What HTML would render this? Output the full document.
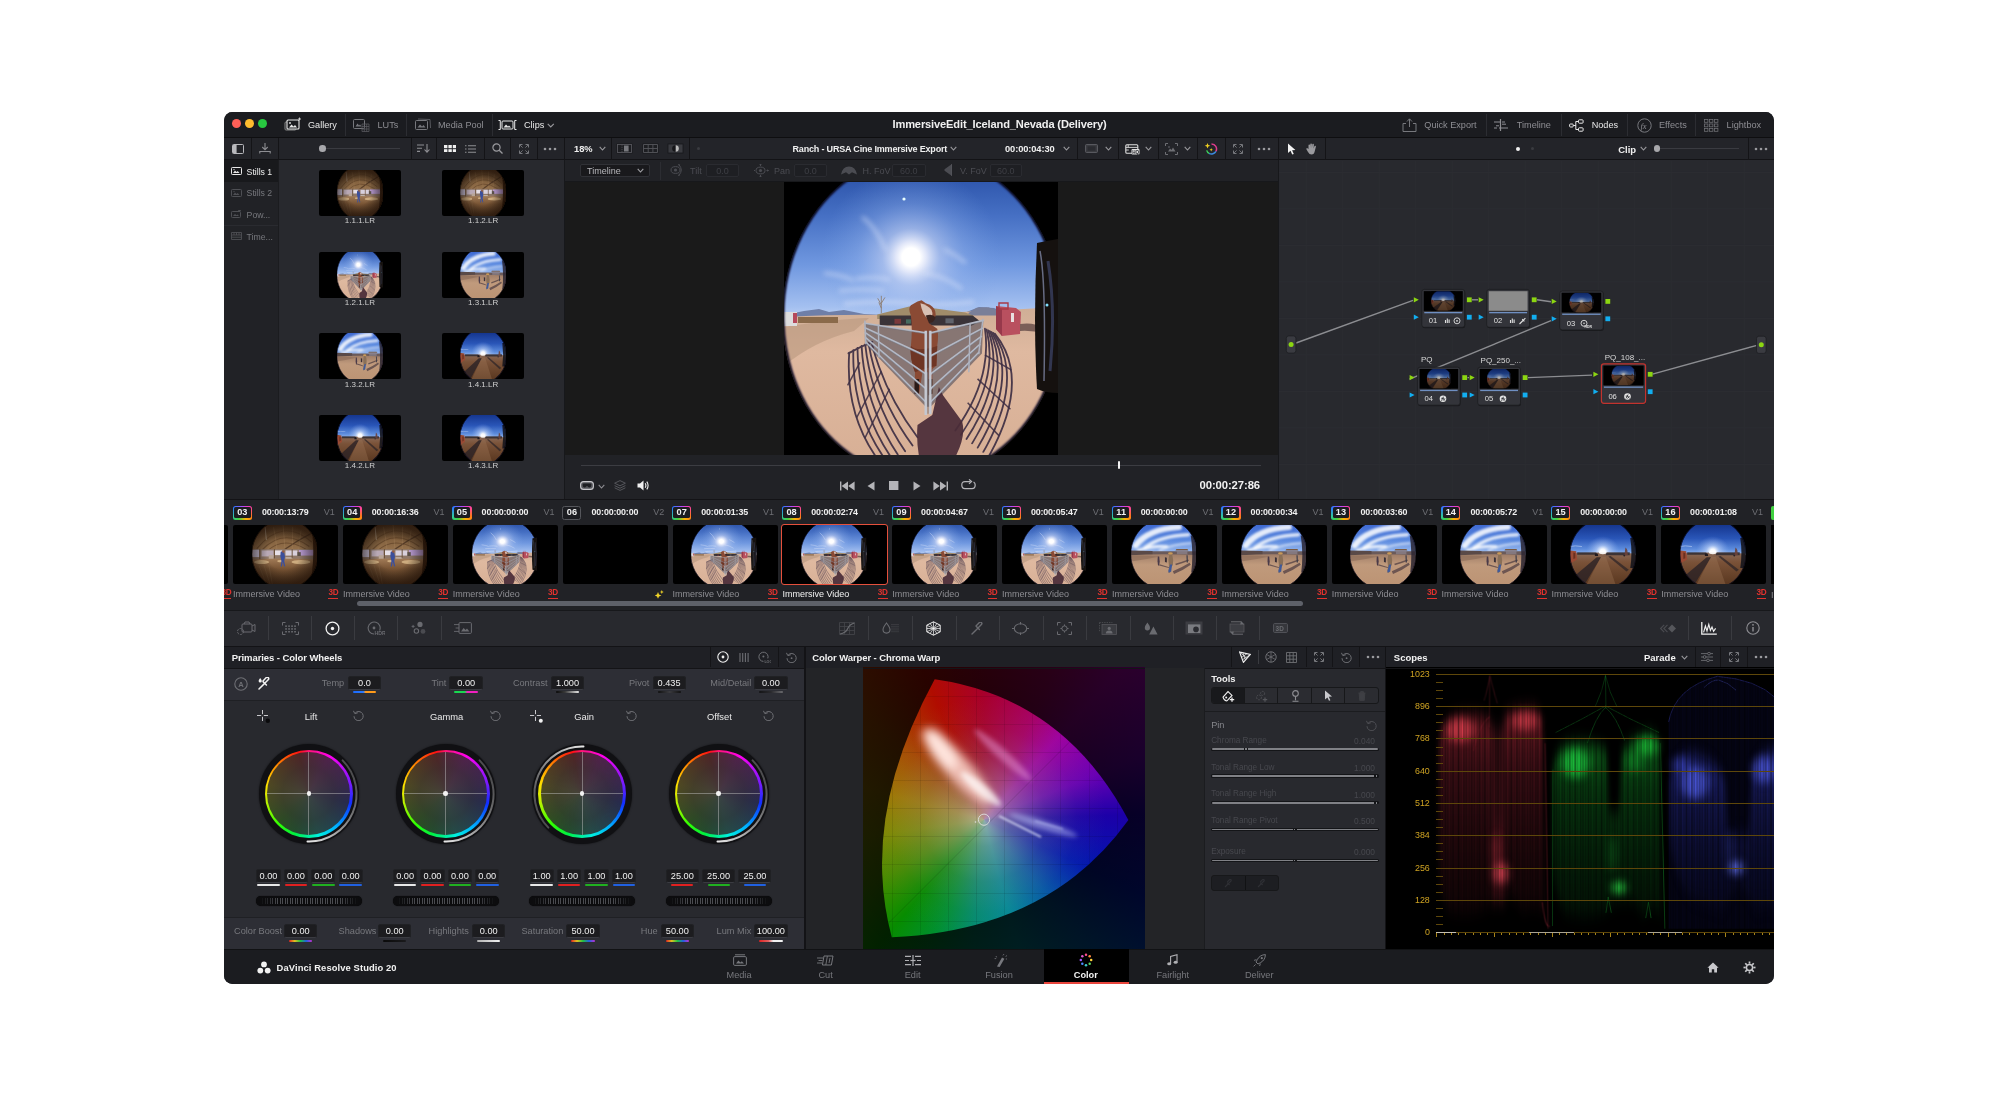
<!DOCTYPE html><html><head><meta charset="utf-8"><title>DaVinci Resolve</title><style>
*{box-sizing:border-box;margin:0;padding:0}
html,body{width:2000px;height:1094px;background:#fff;overflow:hidden}
body{font-family:"Liberation Sans",sans-serif;position:relative;color:#e6e6e6;font-size:9px}
.a{position:absolute}
.t{position:absolute;white-space:nowrap;line-height:1}
#win{position:absolute;left:224px;top:112px;width:1550px;height:872px;background:#28292e;border-radius:8.5px;overflow:hidden;will-change:transform}
.b{font-weight:bold}
</style></head><body>
<div id="win">
<div class="a" style="left:0px;top:0px;width:1550px;height:26px;background:#1b1c20;"></div>
<div class="a" style="left:0px;top:26px;width:1550px;height:22px;background:#232429;"></div>
<div class="a" style="left:0px;top:25px;width:1550px;height:1px;background:#0e0e10;"></div>
<div class="a" style="left:0px;top:47px;width:1550px;height:1px;background:#131316;"></div>
<div class="a" style="left:0px;top:48px;width:54px;height:339px;background:#212226;"></div>
<div class="a" style="left:54px;top:48px;width:286px;height:339px;background:#28292e;"></div>
<div class="a" style="left:340px;top:48px;width:714px;height:21px;background:#212226;"></div>
<div class="a" style="left:340px;top:69px;width:714px;height:274px;background:#1a1a1a;"></div>
<div class="a" style="left:340px;top:343px;width:714px;height:44px;background:#212226;"></div>
<div class="a" style="left:1054px;top:48px;width:496px;height:339px;background:#28292e;"></div>
<div class="a" style="left:0px;top:387px;width:1550px;height:111px;background:#212226;"></div>
<div class="a" style="left:0px;top:498px;width:1550px;height:36px;background:#28292e;"></div>
<div class="a" style="left:0px;top:534px;width:1550px;height:22px;background:#1f2025;"></div>
<div class="a" style="left:0px;top:556px;width:580px;height:32px;background:#2d2e35;"></div>
<div class="a" style="left:0px;top:588px;width:580px;height:217px;background:#28292e;"></div>
<div class="a" style="left:0px;top:805px;width:580px;height:32px;background:#2d2e35;"></div>
<div class="a" style="left:582px;top:556px;width:580px;height:281px;background:#28292e;"></div>
<div class="a" style="left:1162px;top:556px;width:388px;height:281px;background:#000;"></div>
<div class="a" style="left:0px;top:837px;width:1550px;height:35px;background:#1b1c20;"></div>

<svg width="0" height="0" style="position:absolute">
<defs>
<clipPath id="lens"><path d="M138,-27 A139.5,162 0 1,0 138.01,-27Z"/></clipPath>
<filter color-interpolation-filters="sRGB" id="bl1" x="-20%" y="-20%" width="140%" height="140%"><feGaussianBlur stdDeviation="1"/></filter>
<filter color-interpolation-filters="sRGB" id="bl2" x="-20%" y="-20%" width="140%" height="140%"><feGaussianBlur stdDeviation="2.5"/></filter>
<filter color-interpolation-filters="sRGB" id="bl4" x="-30%" y="-30%" width="160%" height="160%"><feGaussianBlur stdDeviation="5"/></filter>
<filter color-interpolation-filters="sRGB" id="bl8" x="-40%" y="-40%" width="180%" height="180%"><feGaussianBlur stdDeviation="10"/></filter>
<linearGradient id="skyA" x1="0" y1="0" x2="0" y2="1"><stop offset="0" stop-color="#3058ae"/><stop offset="0.25" stop-color="#4670c4"/><stop offset="0.6" stop-color="#7098e0"/><stop offset="0.9" stop-color="#a4c0f0"/><stop offset="1" stop-color="#c4d6f4"/></linearGradient>
<radialGradient id="sunA" cx="127" cy="76" r="90" gradientUnits="userSpaceOnUse"><stop offset="0" stop-color="#fff"/><stop offset="0.1" stop-color="#fff"/><stop offset="0.17" stop-color="#eef0fc" stop-opacity="0.9"/><stop offset="0.32" stop-color="#c4d2f4" stop-opacity="0.6"/><stop offset="0.6" stop-color="#9cbaf0" stop-opacity="0.3"/><stop offset="1" stop-color="#78a0e4" stop-opacity="0"/></radialGradient>
<radialGradient id="vig" cx="131" cy="137" r="150" gradientUnits="userSpaceOnUse"><stop offset="0.8" stop-color="#000" stop-opacity="0"/><stop offset="0.93" stop-color="#0a0a30" stop-opacity="0.35"/><stop offset="1" stop-color="#000" stop-opacity="0.7"/></radialGradient>
<linearGradient id="gndA" x1="0" y1="0" x2="0" y2="1"><stop offset="0" stop-color="#cfae96"/><stop offset="0.3" stop-color="#dfb9a0"/><stop offset="1" stop-color="#d8b096"/></linearGradient>

<symbol id="scA" viewBox="0 0 274 274">
<rect width="274" height="274" fill="#000"/>
<g clip-path="url(#lens)">
 <rect width="274" height="140" fill="url(#skyA)"/>
 <rect width="274" height="140" fill="url(#sunA)"/>
 <g filter="url(#bl2)" stroke="#dfe6fa" stroke-opacity="0.55" fill="none" stroke-width="3">
  <path d="M40,92 q20,2 30,8"/><path d="M72,98 q20,-3 34,1"/><path d="M55,110 q25,-3 45,0"/><path d="M140,92 q20,3 38,16"/><path d="M78,36 q14,10 24,34"/><path d="M160,68 q12,6 22,14"/><path d="M60,123 q40,-4 70,0 q30,2 60,-2" stroke-width="4" stroke-opacity="0.5"/>
 </g>
 <circle cx="120" cy="18" r="1.6" fill="#e8ffff"/>
 <!-- mountains -->
 <path d="M0,134 L20,130 L35,128 L45,131 L60,129 L80,133 L100,134 L180,132 L195,126 L210,127 L225,133 L274,128 L274,140 L0,140Z" fill="#6f7fa8"/>
 <!-- ground -->
 <path d="M0,136 Q60,133 100,134 L200,130 Q240,128 274,126 L274,274 L0,274Z" fill="url(#gndA)"/>
 <path d="M0,146 Q50,138 85,137 L70,150 Q30,160 0,185Z" fill="#b9987e" opacity="0.6"/>
 <!-- left building -->
 <rect x="0" y="131" width="13" height="14" fill="#ddd"/><rect x="9" y="132" width="4" height="10" fill="#b5485a"/>
 <path d="M14,136 h40 v6 h-40z" fill="#8a6a4a"/>

 <g transform="translate(56.2,99.2) scale(0.16447)">
  <!-- mountains right, roof, pen ground -->
  <path d="M780,200 L830,168 L900,165 L960,185 L960,215 L780,215Z" fill="#7a7f98"/>
  <path d="M150,265 L520,325 L550,325 L870,245 L862,445 L550,770 L520,770 L150,385Z" fill="#6f6468" opacity=".78"/>
  <path d="M225,208 L420,160 L520,165 L760,196 L812,216 L812,236 L225,236Z" fill="#a08c6a"/>
  <path d="M240,214 L805,214 L850,250 L800,275 L240,275Z" fill="#3a3338"/>
  <g fill="#8a3b3b" opacity=".8"><rect x="330" y="235" width="40" height="30"/><rect x="640" y="232" width="50" height="30" fill="#6a707a"/><rect x="400" y="238" width="30" height="26" fill="#4a7a6a"/></g>
  <path d="M250,200 L250,95 M250,150 L228,110 M250,140 L272,105 M250,170 L235,135" stroke="#8a7868" stroke-width="5" fill="none"/>
  <!-- fence shadows -->
  <g fill="none" stroke="#3a2c42" stroke-width="11" opacity=".9" stroke-linecap="round"><path d="M55,440 Q30,800 215,1070"/><path d="M80,425 Q70,790 260,1070"/><path d="M105,412 Q110,780 305,1070"/><path d="M130,400 Q150,760 350,1060"/><path d="M152,390 Q190,740 395,1040"/><path d="M172,383 Q230,720 440,1005"/><path d="M190,378 Q270,690 470,955"/><path d="M50,445 Q120,405 195,375"/><path d="M880,295 Q925,600 700,914"/><path d="M890,300 Q965,600 734,940"/><path d="M900,305 Q1005,600 768,966"/><path d="M910,310 Q1045,600 802,992"/><path d="M920,315 Q1085,600 836,1018"/><path d="M930,320 Q1125,600 870,1044"/><path d="M940,325 Q1165,600 904,1070"/></g>
  <g fill="none" stroke="#3a2c42" stroke-width="9" opacity=".85"><path d="M250,555 L100,835"/><path d="M300,660 L150,960"/><path d="M120,500 L45,640"/><path d="M880,455 L1040,545"/><path d="M835,600 L1035,785"/><path d="M775,745 L965,945"/></g>
  <!-- centre shadow -->
  <path d="M600,650 L560,820 L470,880 Q462,980 480,1075 L700,1075 Q765,950 742,860 L625,700Z" fill="#4a2c38" opacity=".93"/>
  <!-- horse -->
  <path d="M470,130 L495,122 L520,140 L545,150 Q585,175 580,215 Q575,250 540,262 Q560,275 590,295 Q600,330 590,400 L585,520 L560,540 L560,690 L538,700 L535,560 L500,560 L480,690 L452,690 L455,560 Q420,470 430,400 Q440,300 430,215 Q410,170 430,152Z" fill="#8a4a34"/>
  <path d="M430,400 Q470,440 590,400 L585,520 Q500,540 455,560 Q420,470 430,400Z" fill="#6e3524"/>
  <path d="M488,140 Q530,150 555,180 Q570,215 545,245 Q520,230 505,200 Q492,170 488,140Z" fill="#d8c0b4"/>
  <path d="M520,215 Q560,200 580,225 Q575,255 540,262Z" fill="#3a2420"/>
  <path d="M452,600 L480,600 L478,690 L452,690Z M538,600 L560,600 L560,690 L538,700Z" fill="#2a1a18"/>
  <!-- rails -->
  <g stroke="#b4b9c6" stroke-width="11" fill="none" stroke-linecap="round">
   <path d="M150,262 L520,320"/><path d="M150,290 L520,460"/><path d="M152,320 L520,570"/><path d="M154,350 L520,660"/><path d="M156,376 L520,742"/>
   <path d="M550,320 L870,245"/><path d="M550,460 L866,292"/><path d="M550,570 L858,342"/><path d="M550,660 L848,392"/><path d="M550,742 L842,440"/>
  </g>
  <g stroke="#70747e" stroke-width="4" fill="none" opacity=".8">
   <path d="M150,268 L520,327"/><path d="M150,296 L520,467"/><path d="M152,326 L520,577"/><path d="M154,356 L520,667"/><path d="M156,382 L520,749"/>
   <path d="M550,327 L870,252"/><path d="M550,467 L866,299"/><path d="M550,577 L858,349"/><path d="M550,667 L848,399"/><path d="M550,749 L842,447"/>
  </g>
  <path d="M150,245 L156,390 M232,270 L236,470 M790,262 L782,560 M868,235 L842,450" stroke="#aeb3c0" stroke-width="9" fill="none"/>
  <path d="M520,308 L520,820 M548,308 L548,815" stroke="#c4c8d2" stroke-width="15" fill="none"/>
  <path d="M534,310 L534,812" stroke="#6a6e78" stroke-width="5"/>
 </g>
 <!-- red container -->
 <path d="M212,125 L232,127 L237,131 L236,153 L218,155 L212,148Z" fill="#b9505f"/>
 <path d="M212,125 L218,128 L218,155 L212,148Z" fill="#97394b"/>
 <path d="M215,122 h9 v6 h-9z" fill="none" stroke="#a83a48" stroke-width="1.4"/><rect x="227" y="132" width="3" height="9" fill="#e8dfe0"/>
 <path d="M236,143 q14,-2 24,4 l0,6 q-12,-4 -24,-3z" fill="#7a5f58"/>
 <path d="M138,-27 A139.5,162 0 1,0 138.01,-27Z" fill="none" stroke="#191445" stroke-width="3.5" filter="url(#bl1)" opacity="0.85"/>
</g>
<path d="M138,-27 A139.5,162 0 1,0 138.01,-27Z" fill="none" stroke="#000" stroke-width="2" filter="url(#bl1)"/>
 <!-- lens object right -->
 <path d="M253,62 Q262,60 274,58 L274,212 Q262,212 253,208 Q249,140 253,62Z" fill="#15110f"/>
 <path d="M256,70 Q262,100 260,200" stroke="#8a93b5" stroke-width="1.5" fill="none" opacity="0.7"/>
 <path d="M264,80 Q272,130 266,190" stroke="#3a4060" stroke-width="3" fill="none" opacity="0.8"/>
 <circle cx="263" cy="124" r="1.5" fill="#7fe0ff"/>
</symbol>

<linearGradient id="ceilB" x1="0" y1="0" x2="0" y2="1"><stop offset="0" stop-color="#553a22"/><stop offset="0.5" stop-color="#84623f"/><stop offset="1" stop-color="#9c7852"/></linearGradient>
<linearGradient id="gndB" x1="0" y1="0" x2="0" y2="1"><stop offset="0" stop-color="#a27c58"/><stop offset="0.4" stop-color="#785434"/><stop offset="1" stop-color="#573a22"/></linearGradient>
<radialGradient id="vigB" cx="131" cy="137" r="150" gradientUnits="userSpaceOnUse"><stop offset="0.45" stop-color="#000" stop-opacity="0"/><stop offset="0.95" stop-color="#1a0d05" stop-opacity="0.65"/></radialGradient>
<symbol id="scB" viewBox="0 0 274 274">
<rect width="274" height="274" fill="#000"/>
<g clip-path="url(#lens)">
 <rect width="274" height="140" fill="url(#ceilB)"/>
 <g fill="none" stroke="#5a3d24" stroke-width="5" opacity="0.6">
  <path d="M20,110 Q130,-40 250,80"/><path d="M40,118 Q130,10 240,100"/><path d="M60,124 Q130,50 225,112"/>
 </g>
 <path d="M120,125 Q190,70 262,30" stroke="#4a3220" stroke-width="6" fill="none" opacity="0.8"/>
 <path d="M55,10 L60,70" stroke="#e6dccc" stroke-width="2.5" opacity="0.8"/>
 <g fill="none" stroke="#c9a77c" stroke-width="1.5" opacity="0.5">
  <path d="M90,10 Q100,60 105,120"/><path d="M130,0 Q135,60 138,120"/><path d="M170,8 Q170,60 168,118"/><path d="M205,25 Q200,70 195,118"/>
 </g>
 <rect y="112" width="274" height="55" fill="#8f7868"/>
 <g filter="url(#bl1)">
  <rect x="0" y="115" width="34" height="34" fill="#c8c0d8"/><rect x="40" y="118" width="50" height="28" fill="#b9a9b5"/>
  <rect x="96" y="118" width="30" height="22" fill="#e6dfe6"/><rect x="140" y="118" width="50" height="24" fill="#d8d0dc"/>
  <rect x="196" y="116" width="62" height="26" fill="#b79ad0"/><rect x="190" y="126" width="14" height="18" fill="#5a5048"/>
  <rect x="70" y="140" width="20" height="44" fill="#b9a698"/><rect x="140" y="150" width="30" height="24" fill="#c9bdb5"/>
  <rect x="30" y="112" width="5" height="50" fill="#6b5038"/><rect x="166" y="112" width="4" height="44" fill="#6b5038"/><rect x="92" y="112" width="4" height="44" fill="#6b5038"/>
 </g>
 <path d="M0,160 Q130,150 274,160 L274,274 L0,274Z" fill="url(#gndB)"/>
 <g filter="url(#bl2)" fill="#e0c090" opacity="0.75"><ellipse cx="40" cy="172" rx="32" ry="9"/><ellipse cx="205" cy="172" rx="40" ry="10"/><ellipse cx="120" cy="168" rx="14" ry="5"/></g>
 <path d="M120,124 q8,-6 14,2 l4,20 l-3,22 l4,24 l-5,1 l-5,-22 l-4,22 l-5,0 l3,-26 q-8,-22 -3,-43z" fill="#3c4f9a"/>
 <circle cx="131" cy="124" r="5" fill="#9a5a3a"/>
 <g stroke="#a58a6a" stroke-width="1.5" opacity="0.6"><path d="M30,190 L60,274"/><path d="M50,186 L75,274"/><path d="M70,184 L85,274"/></g>
 <path d="M252,40 Q262,130 250,230 L274,230 L274,40Z" fill="#2a1608" opacity="0.85"/>
 <rect width="274" height="274" fill="url(#vigB)"/>
 <path d="M138,-27 A139.5,162 0 1,0 138.01,-27Z" fill="none" stroke="#1a0d05" stroke-width="5" filter="url(#bl1)" opacity="0.85"/>
</g>
<path d="M138,-27 A139.5,162 0 1,0 138.01,-27Z" fill="none" stroke="#000" stroke-width="2" filter="url(#bl1)"/>
</symbol>

<linearGradient id="skyC" x1="0" y1="0" x2="0" y2="1"><stop offset="0" stop-color="#3f6ad2"/><stop offset="0.5" stop-color="#5b8ae0"/><stop offset="1" stop-color="#a8c4f0"/></linearGradient>
<linearGradient id="gndC" x1="0" y1="0" x2="0" y2="1"><stop offset="0" stop-color="#a07e68"/><stop offset="0.35" stop-color="#c09a7c"/><stop offset="1" stop-color="#bc9474"/></linearGradient>
<symbol id="scC" viewBox="0 0 274 274">
<rect width="274" height="274" fill="#000"/>
<g clip-path="url(#lens)">
 <rect width="274" height="140" fill="url(#skyC)"/>
 <g filter="url(#bl4)" fill="none" stroke="#fff" stroke-linecap="round">
  <path d="M20,95 Q70,20 200,10" stroke-width="26" opacity="0.85"/>
  <path d="M60,105 Q120,50 240,45" stroke-width="16" opacity="0.8"/>
  <path d="M30,118 Q90,95 150,100" stroke-width="12" opacity="0.85"/>
  <path d="M120,118 Q180,88 250,85" stroke-width="9" opacity="0.6"/>
 </g>
 <path d="M0,122 L274,122 L274,145 L0,145Z" fill="#6a5a5a"/>
 <path d="M0,118 L90,121 L90,140 L0,140Z" fill="#5a4a48"/>
 <path d="M190,112 L236,112 L240,118 L186,118Z" fill="#7a5a40"/><rect x="192" y="118" width="44" height="18" fill="#8a8088" opacity="0.8"/>
 <path d="M0,140 Q130,132 274,140 L274,274 L0,274Z" fill="url(#gndC)"/>
 <path d="M0,142 Q60,140 120,146 Q60,160 0,170Z" fill="#8a6a58" opacity="0.6"/>
 <g fill="#4a3a40" opacity="0.7" filter="url(#bl1)"><path d="M175,215 Q215,195 245,175 L250,185 Q220,210 180,228Z"/><path d="M185,180 Q215,170 240,160 L242,166 Q215,178 188,187Z"/><path d="M120,182 Q140,188 160,196 L158,200 Q138,194 118,188Z"/></g>
 <!-- people -->
 <path d="M160,138 q8,-3 13,3 q6,22 2,46 l-6,4 l-4,28 l-8,4 l2,-30 q-6,-30 1,-55z" fill="#8a7058"/>
 <path d="M156,214 l8,-30 l8,0 l-4,32 l-10,6z" fill="#3f5a9a"/>
 <ellipse cx="165" cy="132" rx="10" ry="5" fill="#c99a58"/>
 <path d="M112,146 l6,0 l2,22 l-2,20 l-5,0 l-2,-20z" fill="#4a3a48"/><path d="M142,150 l8,2 l0,22 l-8,-2z" fill="#3a3038"/>
 <path d="M232,140 l5,0 l1,34 l-5,0z" fill="#3a3a48"/>
 <path d="M250,50 Q262,130 252,220 L274,220 L274,50Z" fill="#2a2530" opacity="0.85"/>
 <path d="M138,-27 A139.5,162 0 1,0 138.01,-27Z" fill="none" stroke="#191445" stroke-width="3.5" filter="url(#bl1)" opacity="0.85"/>
</g>
<path d="M138,-27 A139.5,162 0 1,0 138.01,-27Z" fill="none" stroke="#000" stroke-width="2" filter="url(#bl1)"/>
</symbol>

<linearGradient id="skyD" x1="0" y1="0" x2="0" y2="1"><stop offset="0" stop-color="#15368f"/><stop offset="0.45" stop-color="#2a56b8"/><stop offset="0.8" stop-color="#5d8cdc"/><stop offset="1" stop-color="#9bbcf0"/></linearGradient>
<radialGradient id="sunD" cx="137" cy="122" r="70" gradientUnits="userSpaceOnUse"><stop offset="0" stop-color="#fff"/><stop offset="0.15" stop-color="#fff" stop-opacity="0.95"/><stop offset="0.4" stop-color="#cfe0ff" stop-opacity="0.55"/><stop offset="1" stop-color="#8fb0f0" stop-opacity="0"/></radialGradient>
<linearGradient id="gndD" x1="0" y1="0" x2="0" y2="1"><stop offset="0" stop-color="#8a6a58"/><stop offset="0.3" stop-color="#7a5238"/><stop offset="1" stop-color="#5a3820"/></linearGradient>
<symbol id="scD" viewBox="0 0 274 274">
<rect width="274" height="274" fill="#000"/>
<g clip-path="url(#lens)">
 <rect width="274" height="140" fill="url(#skyD)"/>
 <rect width="274" height="150" fill="url(#sunD)"/>
 <path d="M0,100 q20,-6 50,0" stroke="#b9cdf2" stroke-width="4" fill="none" filter="url(#bl1)" opacity="0.7"/>
 <path d="M0,132 Q130,124 274,132 L274,274 L0,274Z" fill="url(#gndD)"/>
 <path d="M30,126 L110,128 L110,138 L30,138Z M150,128 L250,126 L250,140 L150,140Z" fill="#2f2a30" opacity="0.85"/>
 <path d="M0,118 L26,122 L30,160 L4,178 L0,176Z" fill="#9a4a34"/><path d="M14,128 l8,2 l0,24 l-8,4z" fill="#6a3020"/>
 <path d="M232,104 q6,4 8,14 l2,22 l-14,0 l2,-20z" fill="#6a4038" opacity="0.9"/>
 <g filter="url(#bl1)"><path d="M112,150 L20,236 L62,274 L130,150Z" fill="#2a2226" opacity="0.8"/><path d="M160,146 L236,216 L246,208 L170,144Z" fill="#2a2226" opacity="0.7"/><path d="M130,148 L150,148 L190,274 L70,274Z" fill="#a07858" opacity="0.35"/></g>
 <path d="M104,134 q6,-6 12,0 l2,10 l-14,0z" fill="#1f1a20"/><circle cx="227" cy="142" r="4" fill="#2a2024"/>
 <ellipse cx="137" cy="128" rx="16" ry="8" fill="#fff" filter="url(#bl2)" opacity="0.9"/>
 <path d="M252,60 Q262,130 252,200 L274,200 L274,60Z" fill="#15151c" opacity="0.9"/>
 <path d="M138,-27 A139.5,162 0 1,0 138.01,-27Z" fill="none" stroke="#0a0a25" stroke-width="6" filter="url(#bl2)" opacity="0.9"/>
</g>
<path d="M138,-27 A139.5,162 0 1,0 138.01,-27Z" fill="none" stroke="#000" stroke-width="2" filter="url(#bl1)"/>
</symbol>

</defs></svg>

<svg class="a" style="left:559.8px;top:68.80000000000001px;" width="274" height="274" viewBox="0 0 274 274"><use href="#scA"/></svg>
<div class="a" style="left:95.19999999999999px;top:57.80000000000001px;width:81.5px;height:46px;background:#000;border-radius:2px;overflow:hidden;"><svg class="a" style="left:17.8px;top:0px" width="46" height="46" viewBox="0 0 274 274" preserveAspectRatio="none"><use href="#scB"/></svg></div>
<div class="t" style="left:95.19999999999999px;top:105.30000000000001px;width:81.5px;text-align:center;font-size:8px;color:#d0d0d0">1.1.1.LR</div>
<div class="a" style="left:218.39999999999998px;top:57.80000000000001px;width:81.5px;height:46px;background:#000;border-radius:2px;overflow:hidden;"><svg class="a" style="left:17.8px;top:0px" width="46" height="46" viewBox="0 0 274 274" preserveAspectRatio="none"><use href="#scB"/></svg></div>
<div class="t" style="left:218.39999999999998px;top:105.30000000000001px;width:81.5px;text-align:center;font-size:8px;color:#d0d0d0">1.1.2.LR</div>
<div class="a" style="left:95.19999999999999px;top:139.5px;width:81.5px;height:46px;background:#000;border-radius:2px;overflow:hidden;"><svg class="a" style="left:17.8px;top:0px" width="46" height="46" viewBox="0 0 274 274" preserveAspectRatio="none"><use href="#scA"/></svg></div>
<div class="t" style="left:95.19999999999999px;top:187.0px;width:81.5px;text-align:center;font-size:8px;color:#d0d0d0">1.2.1.LR</div>
<div class="a" style="left:218.39999999999998px;top:139.5px;width:81.5px;height:46px;background:#000;border-radius:2px;overflow:hidden;"><svg class="a" style="left:17.8px;top:0px" width="46" height="46" viewBox="0 0 274 274" preserveAspectRatio="none"><use href="#scC"/></svg></div>
<div class="t" style="left:218.39999999999998px;top:187.0px;width:81.5px;text-align:center;font-size:8px;color:#d0d0d0">1.3.1.LR</div>
<div class="a" style="left:95.19999999999999px;top:221.20000000000005px;width:81.5px;height:46px;background:#000;border-radius:2px;overflow:hidden;"><svg class="a" style="left:17.8px;top:0px" width="46" height="46" viewBox="0 0 274 274" preserveAspectRatio="none"><use href="#scC"/></svg></div>
<div class="t" style="left:95.19999999999999px;top:268.70000000000005px;width:81.5px;text-align:center;font-size:8px;color:#d0d0d0">1.3.2.LR</div>
<div class="a" style="left:218.39999999999998px;top:221.20000000000005px;width:81.5px;height:46px;background:#000;border-radius:2px;overflow:hidden;"><svg class="a" style="left:17.8px;top:0px" width="46" height="46" viewBox="0 0 274 274" preserveAspectRatio="none"><use href="#scD"/></svg></div>
<div class="t" style="left:218.39999999999998px;top:268.70000000000005px;width:81.5px;text-align:center;font-size:8px;color:#d0d0d0">1.4.1.LR</div>
<div class="a" style="left:95.19999999999999px;top:302.90000000000003px;width:81.5px;height:46px;background:#000;border-radius:2px;overflow:hidden;"><svg class="a" style="left:17.8px;top:0px" width="46" height="46" viewBox="0 0 274 274" preserveAspectRatio="none"><use href="#scD"/></svg></div>
<div class="t" style="left:95.19999999999999px;top:350.40000000000003px;width:81.5px;text-align:center;font-size:8px;color:#d0d0d0">1.4.2.LR</div>
<div class="a" style="left:218.39999999999998px;top:302.90000000000003px;width:81.5px;height:46px;background:#000;border-radius:2px;overflow:hidden;"><svg class="a" style="left:17.8px;top:0px" width="46" height="46" viewBox="0 0 274 274" preserveAspectRatio="none"><use href="#scD"/></svg></div>
<div class="t" style="left:218.39999999999998px;top:350.40000000000003px;width:81.5px;text-align:center;font-size:8px;color:#d0d0d0">1.4.3.LR</div>
<div class="a" style="left:9.099999999999994px;top:413px;width:105px;height:59px;background:#000;border-radius:2px;overflow:hidden;"><svg class="a" style="left:18.8px;top:0px" width="65.5" height="59" viewBox="0 0 274 274" preserveAspectRatio="none"><use href="#scB"/></svg></div>
<div class="a" style="left:118.95999999999998px;top:413px;width:105px;height:59px;background:#000;border-radius:2px;overflow:hidden;"><svg class="a" style="left:18.8px;top:0px" width="65.5" height="59" viewBox="0 0 274 274" preserveAspectRatio="none"><use href="#scB"/></svg></div>
<div class="a" style="left:228.82px;top:413px;width:105px;height:59px;background:#000;border-radius:2px;overflow:hidden;"><svg class="a" style="left:18.8px;top:0px" width="65.5" height="59" viewBox="0 0 274 274" preserveAspectRatio="none"><use href="#scA"/></svg></div>
<div class="a" style="left:338.67999999999995px;top:413px;width:105px;height:59px;background:#000;border-radius:2px"></div>
<div class="a" style="left:448.53999999999996px;top:413px;width:105px;height:59px;background:#000;border-radius:2px;overflow:hidden;"><svg class="a" style="left:18.8px;top:0px" width="65.5" height="59" viewBox="0 0 274 274" preserveAspectRatio="none"><use href="#scA"/></svg></div>
<div class="a" style="left:558.4px;top:413px;width:105px;height:59px;background:#000;border-radius:2px;overflow:hidden;"><svg class="a" style="left:18.8px;top:0px" width="65.5" height="59" viewBox="0 0 274 274" preserveAspectRatio="none"><use href="#scA"/></svg></div>
<div class="a" style="left:668.26px;top:413px;width:105px;height:59px;background:#000;border-radius:2px;overflow:hidden;"><svg class="a" style="left:18.8px;top:0px" width="65.5" height="59" viewBox="0 0 274 274" preserveAspectRatio="none"><use href="#scA"/></svg></div>
<div class="a" style="left:778.12px;top:413px;width:105px;height:59px;background:#000;border-radius:2px;overflow:hidden;"><svg class="a" style="left:18.8px;top:0px" width="65.5" height="59" viewBox="0 0 274 274" preserveAspectRatio="none"><use href="#scA"/></svg></div>
<div class="a" style="left:887.98px;top:413px;width:105px;height:59px;background:#000;border-radius:2px;overflow:hidden;"><svg class="a" style="left:18.8px;top:0px" width="65.5" height="59" viewBox="0 0 274 274" preserveAspectRatio="none"><use href="#scC"/></svg></div>
<div class="a" style="left:997.8399999999999px;top:413px;width:105px;height:59px;background:#000;border-radius:2px;overflow:hidden;"><svg class="a" style="left:18.8px;top:0px" width="65.5" height="59" viewBox="0 0 274 274" preserveAspectRatio="none"><use href="#scC"/></svg></div>
<div class="a" style="left:1107.6999999999998px;top:413px;width:105px;height:59px;background:#000;border-radius:2px;overflow:hidden;"><svg class="a" style="left:18.8px;top:0px" width="65.5" height="59" viewBox="0 0 274 274" preserveAspectRatio="none"><use href="#scC"/></svg></div>
<div class="a" style="left:1217.56px;top:413px;width:105px;height:59px;background:#000;border-radius:2px;overflow:hidden;"><svg class="a" style="left:18.8px;top:0px" width="65.5" height="59" viewBox="0 0 274 274" preserveAspectRatio="none"><use href="#scC"/></svg></div>
<div class="a" style="left:1327.4199999999998px;top:413px;width:105px;height:59px;background:#000;border-radius:2px;overflow:hidden;"><svg class="a" style="left:18.8px;top:0px" width="65.5" height="59" viewBox="0 0 274 274" preserveAspectRatio="none"><use href="#scD"/></svg></div>
<div class="a" style="left:1437.28px;top:413px;width:105px;height:59px;background:#000;border-radius:2px;overflow:hidden;"><svg class="a" style="left:18.8px;top:0px" width="65.5" height="59" viewBox="0 0 274 274" preserveAspectRatio="none"><use href="#scD"/></svg></div>
<div class="a" style="left:32.9px;top:629.6px;width:104px;height:104px">
<div class="a" style="left:2px;top:2px;width:100px;height:100px;border-radius:50%;background:#101013;box-shadow:0 0 2px rgba(0,0,0,.6)"></div>
<svg class="a" style="left:0;top:0;transform:rotate(0deg)" width="104" height="104" viewBox="-52 -52 104 104"><defs><linearGradient id="ag308" x1="1" y1="0" x2="0" y2="1"><stop offset="0" stop-color="#bbb" stop-opacity="0.25"/><stop offset="1" stop-color="#e8e8e8"/></linearGradient></defs><path d="M33.6,-33.6 A47.5,47.5 0 0 1 -1.5,47.5" fill="none" stroke="url(#ag308)" stroke-width="2" stroke-linecap="round"/></svg>
<div class="a" style="left:8px;top:8px;width:88px;height:88px;border-radius:50%;background:conic-gradient(from 0deg,#ff1478 0deg,#ff00f0 29deg,#7a1aff 75deg,#1030ff 103deg,#00b0ff 140deg,#00f0e0 167deg,#00f040 200deg,#30ff00 225deg,#c8f000 262deg,#ffe000 283deg,#ff8000 315deg,#ff1010 347deg,#ff1478 360deg)"></div>
<div class="a" style="left:10.6px;top:10.6px;width:82.8px;height:82.8px;border-radius:50%;background:radial-gradient(circle,rgba(62,60,60,.96) 0%,rgba(48,46,46,.9) 45%,rgba(36,34,34,.74) 100%),conic-gradient(from 0deg,#ff1478 0deg,#ff00f0 29deg,#7a1aff 75deg,#1030ff 103deg,#00b0ff 140deg,#00f0e0 167deg,#00f040 200deg,#30ff00 225deg,#c8f000 262deg,#ffe000 283deg,#ff8000 315deg,#ff1010 347deg,#ff1478 360deg)"></div>
<div class="a" style="left:51.5px;top:10.6px;width:1px;height:82.8px;background:rgba(200,200,200,.45)"></div>
<div class="a" style="left:10.6px;top:51.5px;width:82.8px;height:1px;background:rgba(200,200,200,.45)"></div>
<div class="a" style="left:49.8px;top:49.8px;width:4.4px;height:4.4px;border-radius:50%;background:#f2f2f2"></div>
</div>
<div class="a" style="left:169.5px;top:629.6px;width:104px;height:104px">
<div class="a" style="left:2px;top:2px;width:100px;height:100px;border-radius:50%;background:#101013;box-shadow:0 0 2px rgba(0,0,0,.6)"></div>
<svg class="a" style="left:0;top:0;transform:rotate(0deg)" width="104" height="104" viewBox="-52 -52 104 104"><defs><linearGradient id="ag445" x1="1" y1="0" x2="0" y2="1"><stop offset="0" stop-color="#bbb" stop-opacity="0.25"/><stop offset="1" stop-color="#e8e8e8"/></linearGradient></defs><path d="M33.6,-33.6 A47.5,47.5 0 0 1 -1.5,47.5" fill="none" stroke="url(#ag445)" stroke-width="2" stroke-linecap="round"/></svg>
<div class="a" style="left:8px;top:8px;width:88px;height:88px;border-radius:50%;background:conic-gradient(from 0deg,#ff1478 0deg,#ff00f0 29deg,#7a1aff 75deg,#1030ff 103deg,#00b0ff 140deg,#00f0e0 167deg,#00f040 200deg,#30ff00 225deg,#c8f000 262deg,#ffe000 283deg,#ff8000 315deg,#ff1010 347deg,#ff1478 360deg)"></div>
<div class="a" style="left:10.6px;top:10.6px;width:82.8px;height:82.8px;border-radius:50%;background:radial-gradient(circle,rgba(62,60,60,.96) 0%,rgba(48,46,46,.9) 45%,rgba(36,34,34,.74) 100%),conic-gradient(from 0deg,#ff1478 0deg,#ff00f0 29deg,#7a1aff 75deg,#1030ff 103deg,#00b0ff 140deg,#00f0e0 167deg,#00f040 200deg,#30ff00 225deg,#c8f000 262deg,#ffe000 283deg,#ff8000 315deg,#ff1010 347deg,#ff1478 360deg)"></div>
<div class="a" style="left:51.5px;top:10.6px;width:1px;height:82.8px;background:rgba(200,200,200,.45)"></div>
<div class="a" style="left:10.6px;top:51.5px;width:82.8px;height:1px;background:rgba(200,200,200,.45)"></div>
<div class="a" style="left:49.8px;top:49.8px;width:4.4px;height:4.4px;border-radius:50%;background:#f2f2f2"></div>
</div>
<div class="a" style="left:306.1px;top:629.6px;width:104px;height:104px">
<div class="a" style="left:2px;top:2px;width:100px;height:100px;border-radius:50%;background:#101013;box-shadow:0 0 2px rgba(0,0,0,.6)"></div>
<svg class="a" style="left:0;top:0;transform:rotate(180deg)" width="104" height="104" viewBox="-52 -52 104 104"><defs><linearGradient id="ag582" x1="1" y1="0" x2="0" y2="1"><stop offset="0" stop-color="#bbb" stop-opacity="0.25"/><stop offset="1" stop-color="#e8e8e8"/></linearGradient></defs><path d="M33.6,-33.6 A47.5,47.5 0 0 1 -1.5,47.5" fill="none" stroke="url(#ag582)" stroke-width="2" stroke-linecap="round"/></svg>
<div class="a" style="left:8px;top:8px;width:88px;height:88px;border-radius:50%;background:conic-gradient(from 0deg,#ff1478 0deg,#ff00f0 29deg,#7a1aff 75deg,#1030ff 103deg,#00b0ff 140deg,#00f0e0 167deg,#00f040 200deg,#30ff00 225deg,#c8f000 262deg,#ffe000 283deg,#ff8000 315deg,#ff1010 347deg,#ff1478 360deg)"></div>
<div class="a" style="left:10.6px;top:10.6px;width:82.8px;height:82.8px;border-radius:50%;background:radial-gradient(circle,rgba(62,60,60,.96) 0%,rgba(48,46,46,.9) 45%,rgba(36,34,34,.74) 100%),conic-gradient(from 0deg,#ff1478 0deg,#ff00f0 29deg,#7a1aff 75deg,#1030ff 103deg,#00b0ff 140deg,#00f0e0 167deg,#00f040 200deg,#30ff00 225deg,#c8f000 262deg,#ffe000 283deg,#ff8000 315deg,#ff1010 347deg,#ff1478 360deg)"></div>
<div class="a" style="left:51.5px;top:10.6px;width:1px;height:82.8px;background:rgba(200,200,200,.45)"></div>
<div class="a" style="left:10.6px;top:51.5px;width:82.8px;height:1px;background:rgba(200,200,200,.45)"></div>
<div class="a" style="left:49.8px;top:49.8px;width:4.4px;height:4.4px;border-radius:50%;background:#f2f2f2"></div>
</div>
<div class="a" style="left:442.7px;top:629.6px;width:104px;height:104px">
<div class="a" style="left:2px;top:2px;width:100px;height:100px;border-radius:50%;background:#101013;box-shadow:0 0 2px rgba(0,0,0,.6)"></div>
<svg class="a" style="left:0;top:0;transform:rotate(0deg)" width="104" height="104" viewBox="-52 -52 104 104"><defs><linearGradient id="ag718" x1="1" y1="0" x2="0" y2="1"><stop offset="0" stop-color="#bbb" stop-opacity="0.25"/><stop offset="1" stop-color="#e8e8e8"/></linearGradient></defs><path d="M33.6,-33.6 A47.5,47.5 0 0 1 -1.5,47.5" fill="none" stroke="url(#ag718)" stroke-width="2" stroke-linecap="round"/></svg>
<div class="a" style="left:8px;top:8px;width:88px;height:88px;border-radius:50%;background:conic-gradient(from 0deg,#ff1478 0deg,#ff00f0 29deg,#7a1aff 75deg,#1030ff 103deg,#00b0ff 140deg,#00f0e0 167deg,#00f040 200deg,#30ff00 225deg,#c8f000 262deg,#ffe000 283deg,#ff8000 315deg,#ff1010 347deg,#ff1478 360deg)"></div>
<div class="a" style="left:10.6px;top:10.6px;width:82.8px;height:82.8px;border-radius:50%;background:radial-gradient(circle,rgba(62,60,60,.96) 0%,rgba(48,46,46,.9) 45%,rgba(36,34,34,.74) 100%),conic-gradient(from 0deg,#ff1478 0deg,#ff00f0 29deg,#7a1aff 75deg,#1030ff 103deg,#00b0ff 140deg,#00f0e0 167deg,#00f040 200deg,#30ff00 225deg,#c8f000 262deg,#ffe000 283deg,#ff8000 315deg,#ff1010 347deg,#ff1478 360deg)"></div>
<div class="a" style="left:51.5px;top:10.6px;width:1px;height:82.8px;background:rgba(200,200,200,.45)"></div>
<div class="a" style="left:10.6px;top:51.5px;width:82.8px;height:1px;background:rgba(200,200,200,.45)"></div>
<div class="a" style="left:49.8px;top:49.8px;width:4.4px;height:4.4px;border-radius:50%;background:#f2f2f2"></div>
</div>
<div class="a" style="left:639.4px;top:555.4px;width:281.6px;height:281.6px;overflow:hidden;background:conic-gradient(from 0deg at 121px 152.7px,#a8002c 0deg,#a80064 25deg,#a000a0 42deg,#6a00b4 68deg,#1c00a8 88deg,#0018b0 115deg,#0058a8 140deg,#008a98 165deg,#008c70 185deg,#009030 203deg,#078c00 220deg,#4a8c00 240deg,#808a00 262deg,#a07800 285deg,#a84a00 312deg,#b00c00 338deg,#a8002c 360deg)">
<div class="a" style="left:0;top:0;width:100%;height:100%;background:radial-gradient(circle at 121px 152.7px,rgba(0,0,0,.9) 0%,rgba(0,0,0,.8) 50%,rgba(0,0,0,.72) 100%)"></div>
<div class="a" style="left:0;top:0;width:100%;height:100%;clip-path:path('M71.3,11.9 Q-4,150 28.4,269.8 Q186,263 265,152.7 Q200,30 71.3,11.9Z');background:radial-gradient(circle at 121px 152.7px,rgba(185,185,180,.78) 0,rgba(165,165,160,.52) 12%,rgba(140,140,140,.26) 28%,rgba(128,128,128,.08) 42%,rgba(128,128,128,0) 55%),conic-gradient(from 0deg at 121px 152.7px,#a8002c 0deg,#a80064 25deg,#a000a0 42deg,#6a00b4 68deg,#1c00a8 88deg,#0018b0 115deg,#0058a8 140deg,#008a98 165deg,#008c70 185deg,#009030 203deg,#078c00 220deg,#4a8c00 240deg,#808a00 262deg,#a07800 285deg,#a84a00 312deg,#b00c00 338deg,#a8002c 360deg)">
<div class="a" style="left:28.2px;top:0;width:1px;height:100%;background:rgba(0,0,0,.09)"></div><div class="a" style="top:28.2px;left:0;height:1px;width:100%;background:rgba(0,0,0,.09)"></div><div class="a" style="left:56.3px;top:0;width:1px;height:100%;background:rgba(0,0,0,.09)"></div><div class="a" style="top:56.3px;left:0;height:1px;width:100%;background:rgba(0,0,0,.09)"></div><div class="a" style="left:84.5px;top:0;width:1px;height:100%;background:rgba(0,0,0,.09)"></div><div class="a" style="top:84.5px;left:0;height:1px;width:100%;background:rgba(0,0,0,.09)"></div><div class="a" style="left:112.6px;top:0;width:1px;height:100%;background:rgba(0,0,0,.09)"></div><div class="a" style="top:112.6px;left:0;height:1px;width:100%;background:rgba(0,0,0,.09)"></div><div class="a" style="left:140.8px;top:0;width:1px;height:100%;background:rgba(0,0,0,.09)"></div><div class="a" style="top:140.8px;left:0;height:1px;width:100%;background:rgba(0,0,0,.09)"></div><div class="a" style="left:169.0px;top:0;width:1px;height:100%;background:rgba(0,0,0,.09)"></div><div class="a" style="top:169.0px;left:0;height:1px;width:100%;background:rgba(0,0,0,.09)"></div><div class="a" style="left:197.1px;top:0;width:1px;height:100%;background:rgba(0,0,0,.09)"></div><div class="a" style="top:197.1px;left:0;height:1px;width:100%;background:rgba(0,0,0,.09)"></div><div class="a" style="left:225.3px;top:0;width:1px;height:100%;background:rgba(0,0,0,.09)"></div><div class="a" style="top:225.3px;left:0;height:1px;width:100%;background:rgba(0,0,0,.09)"></div><div class="a" style="left:253.4px;top:0;width:1px;height:100%;background:rgba(0,0,0,.09)"></div><div class="a" style="top:253.4px;left:0;height:1px;width:100%;background:rgba(0,0,0,.09)"></div>
<svg class="a" style="left:0;top:0" width="281.6" height="281.6"><line x1="0" y1="281.6" x2="281.6" y2="0" stroke="rgba(0,0,0,.13)" stroke-width="1"/><g filter="url(#bl4)"><ellipse cx="0" cy="0" rx="50" ry="12" fill="#f8cfc6" opacity=".88" transform="translate(94,100) rotate(48)"/><ellipse cx="0" cy="0" rx="24" ry="10" fill="#ffe9e2" opacity=".9" transform="translate(78,82) rotate(55)"/></g><g filter="url(#bl2)"><ellipse cx="0" cy="0" rx="38" ry="5" fill="#f0a0e0" opacity=".45" transform="translate(140,88) rotate(42)"/><ellipse cx="0" cy="0" rx="26" ry="5" fill="#fff" opacity=".7" transform="translate(118,122) rotate(40)"/><ellipse cx="0" cy="0" rx="36" ry="4" fill="#c8d0ff" opacity=".5" transform="translate(180,158) rotate(18)"/></g><g filter="url(#bl1)"><path d="M136,149 L178,170" stroke="#e8ecff" stroke-width="1.6" opacity=".85"/><path d="M172,154 L200,162" stroke="#d0d8ff" stroke-width="1.4" opacity=".5"/></g><circle cx="121" cy="152.7" r="5.6" fill="none" stroke="#e0e0e0" stroke-width="0.9"/><circle cx="112.5" cy="155" r="0.8" fill="#ddd"/></svg>
</div></div>
<div class="a" style="left:1162px;top:555.4px;width:388px;height:282px;overflow:hidden;background:#000">
<svg class="a" style="left:0;top:0" width="388" height="282" viewBox="0 0 388 282"><defs><filter color-interpolation-filters="sRGB" id="sb1" x="-60%" y="-60%" width="220%" height="220%"><feGaussianBlur stdDeviation="9 28"/></filter><filter color-interpolation-filters="sRGB" id="sb2" x="-30%" y="-30%" width="160%" height="160%"><feGaussianBlur stdDeviation="10 22"/></filter><filter color-interpolation-filters="sRGB" id="sb3" x="-80%" y="-80%" width="260%" height="260%"><feGaussianBlur stdDeviation="16"/></filter><filter color-interpolation-filters="sRGB" id="sb0" x="-30%" y="-30%" width="160%" height="160%"><feGaussianBlur stdDeviation="2.5"/></filter><linearGradient id="fr" x1="0" y1="0" x2="0" y2="1"><stop offset="0" stop-color="#c83040" stop-opacity=".62"/><stop offset=".3" stop-color="#8a2030" stop-opacity=".46"/><stop offset="1" stop-color="#4a1018" stop-opacity=".24"/></linearGradient><linearGradient id="fg" x1="0" y1="0" x2="0" y2="1"><stop offset="0" stop-color="#18b030" stop-opacity=".66"/><stop offset=".3" stop-color="#0e7a20" stop-opacity=".48"/><stop offset="1" stop-color="#084a14" stop-opacity=".26"/></linearGradient><linearGradient id="fb" x1="0" y1="0" x2="0" y2="1"><stop offset="0" stop-color="#3a44c8" stop-opacity=".66"/><stop offset=".3" stop-color="#262c90" stop-opacity=".48"/><stop offset="1" stop-color="#14174a" stop-opacity=".24"/></linearGradient></defs><g transform="translate(0,-3.4) scale(0.2651)"><g filter="url(#sb1)"><path d="M200,290 Q215,200 300,195 Q380,190 400,230 L410,600 L440,600 L445,200 Q500,165 560,175 Q590,185 592,260 L600,940 Q560,900 520,930 L480,880 Q440,860 400,900 Q330,960 240,930 Q200,900 200,700Z" fill="url(#fr)"/><path d="M400,240 L445,240 L450,900 L400,900Z" fill="#5a1520" opacity=".6"/></g><g filter="url(#sb3)"><ellipse cx="280" cy="250" rx="55" ry="45" fill="#ff4858" opacity=".75"/><ellipse cx="525" cy="215" rx="50" ry="35" fill="#ff4858" opacity=".7"/><ellipse cx="432" cy="790" rx="26" ry="40" fill="#ff5060" opacity=".9"/><ellipse cx="415" cy="700" rx="10" ry="60" fill="#e84050" opacity=".6"/></g><g filter="url(#sb0)" fill="none" stroke="#a02838" stroke-opacity=".45" stroke-width="3"><path d="M392,45 L390,240"/><path d="M370,140 Q385,90 392,45 Q402,90 420,150"/><path d="M330,330 Q350,230 392,200" stroke-opacity=".5"/><path d="M600,300 L612,1000" stroke-opacity=".6"/><path d="M590,900 Q600,1000 618,990" stroke-opacity=".8"/></g><g filter="url(#sb1)"><path d="M630,400 Q640,300 720,298 Q800,300 832,330 L840,560 L880,560 L890,330 Q940,270 1000,268 Q1030,270 1030,340 L1040,950 Q1000,900 970,950 L940,900 Q880,880 830,930 Q760,970 680,940 Q630,900 630,700Z" fill="url(#fg)"/></g><g filter="url(#sb3)"><ellipse cx="715" cy="375" rx="50" ry="55" fill="#20e848" opacity=".8"/><ellipse cx="985" cy="310" rx="40" ry="35" fill="#20e040" opacity=".75"/><ellipse cx="940" cy="370" rx="30" ry="40" fill="#18c038" opacity=".5"/><ellipse cx="878" cy="845" rx="24" ry="22" fill="#30ff50" opacity="1"/><ellipse cx="855" cy="720" rx="7" ry="70" fill="#20d040" opacity=".6"/></g><g filter="url(#sb0)" fill="none" stroke="#148a28" stroke-opacity=".45" stroke-width="3"><path d="M828,45 L830,170"/><path d="M640,260 Q740,210 828,160 Q920,210 1030,260" stroke-opacity=".55"/><path d="M790,160 Q815,110 828,45 Q842,110 870,160" stroke-opacity=".5"/><path d="M760,300 Q790,200 828,165 Q870,200 900,290" stroke-opacity=".6"/><path d="M1035,300 L1052,1000" stroke-opacity=".7"/><path d="M630,400 L628,990" stroke-opacity=".5"/><path d="M830,940 L838,880 L850,940 M980,960 L990,900 L1000,960" stroke-opacity=".7"/></g><g filter="url(#sb0)"><path d="M1066,1000 L1066,220 Q1090,90 1250,48 Q1400,60 1470,130 L1470,1000Z" fill="#08082c" opacity=".5"/><path d="M1066,220 Q1090,90 1250,48 Q1400,60 1470,130" fill="none" stroke="#2a2e8a" stroke-width="3" opacity=".8"/><path d="M1200,90 Q1230,60 1255,62 Q1290,70 1320,100" fill="none" stroke="#3a40a0" stroke-width="3" opacity=".7"/></g><g filter="url(#sb1)"><path d="M1070,440 Q1090,340 1160,345 Q1250,370 1280,440 L1290,640 L1370,640 L1380,400 Q1410,330 1480,330 L1480,930 Q1440,900 1400,930 L1330,820 L1270,930 Q1200,900 1150,880 Q1080,800 1070,640Z" fill="url(#fb)"/></g><g filter="url(#sb3)"><ellipse cx="1165" cy="450" rx="50" ry="60" fill="#5866ff" opacity=".8"/><ellipse cx="1110" cy="380" rx="30" ry="30" fill="#4a58f0" opacity=".55"/><ellipse cx="1425" cy="400" rx="40" ry="50" fill="#5866ff" opacity=".75"/><ellipse cx="1320" cy="770" rx="26" ry="24" fill="#6878ff" opacity="1"/><ellipse cx="1295" cy="690" rx="7" ry="60" fill="#4a58e0" opacity=".6"/></g></g></svg>
<div class="a" style="left:50px;top:0;width:338px;height:270px;mix-blend-mode:multiply;background:repeating-linear-gradient(90deg,rgba(0,0,0,0) 0,rgba(0,0,0,.35) 1.3px,rgba(0,0,0,0) 2.7px,rgba(0,0,0,.22) 4.1px,rgba(0,0,0,0) 5.3px),repeating-linear-gradient(90deg,rgba(0,0,0,0) 0,rgba(0,0,0,.25) 3.7px,rgba(0,0,0,0) 7.1px,rgba(0,0,0,.3) 9.4px,rgba(0,0,0,0) 13px)"></div>
<div class="a" style="left:50.4px;top:6.7px;width:338px;height:1px;background:#5e470a"></div>
<div class="t" style="right:344.2px;top:2.7px;font-size:8.9px;color:#cfa322">1023</div>
<div class="a" style="left:50.4px;top:38.5px;width:338px;height:1px;background:#5e470a"></div>
<div class="t" style="right:344.2px;top:34.5px;font-size:8.9px;color:#cfa322">896</div>
<div class="a" style="left:50.4px;top:71.1px;width:338px;height:1px;background:#5e470a"></div>
<div class="t" style="right:344.2px;top:67.1px;font-size:8.9px;color:#cfa322">768</div>
<div class="a" style="left:50.4px;top:103.5px;width:338px;height:1px;background:#5e470a"></div>
<div class="t" style="right:344.2px;top:99.5px;font-size:8.9px;color:#cfa322">640</div>
<div class="a" style="left:50.4px;top:135.8px;width:338px;height:1px;background:#5e470a"></div>
<div class="t" style="right:344.2px;top:131.8px;font-size:8.9px;color:#cfa322">512</div>
<div class="a" style="left:50.4px;top:167.9px;width:338px;height:1px;background:#5e470a"></div>
<div class="t" style="right:344.2px;top:163.9px;font-size:8.9px;color:#cfa322">384</div>
<div class="a" style="left:50.4px;top:200.2px;width:338px;height:1px;background:#5e470a"></div>
<div class="t" style="right:344.2px;top:196.2px;font-size:8.9px;color:#cfa322">256</div>
<div class="a" style="left:50.4px;top:232.6px;width:338px;height:1px;background:#5e470a"></div>
<div class="t" style="right:344.2px;top:228.6px;font-size:8.9px;color:#cfa322">128</div>
<div class="a" style="left:50.4px;top:264.7px;width:338px;height:1px;background:#5e470a"></div>
<div class="t" style="right:344.2px;top:260.7px;font-size:8.9px;color:#cfa322">0</div>
<div class="a" style="left:50.4px;top:14.8px;width:7px;height:1px;background:#5e470a"></div><div class="a" style="left:50.4px;top:22.8px;width:7px;height:1px;background:#5e470a"></div><div class="a" style="left:50.4px;top:30.9px;width:7px;height:1px;background:#5e470a"></div><div class="a" style="left:50.4px;top:47.0px;width:7px;height:1px;background:#5e470a"></div><div class="a" style="left:50.4px;top:55.1px;width:7px;height:1px;background:#5e470a"></div><div class="a" style="left:50.4px;top:63.1px;width:7px;height:1px;background:#5e470a"></div><div class="a" style="left:50.4px;top:79.3px;width:7px;height:1px;background:#5e470a"></div><div class="a" style="left:50.4px;top:87.3px;width:7px;height:1px;background:#5e470a"></div><div class="a" style="left:50.4px;top:95.4px;width:7px;height:1px;background:#5e470a"></div><div class="a" style="left:50.4px;top:111.5px;width:7px;height:1px;background:#5e470a"></div><div class="a" style="left:50.4px;top:119.6px;width:7px;height:1px;background:#5e470a"></div><div class="a" style="left:50.4px;top:127.6px;width:7px;height:1px;background:#5e470a"></div><div class="a" style="left:50.4px;top:143.8px;width:7px;height:1px;background:#5e470a"></div><div class="a" style="left:50.4px;top:151.8px;width:7px;height:1px;background:#5e470a"></div><div class="a" style="left:50.4px;top:159.9px;width:7px;height:1px;background:#5e470a"></div><div class="a" style="left:50.4px;top:176.0px;width:7px;height:1px;background:#5e470a"></div><div class="a" style="left:50.4px;top:184.1px;width:7px;height:1px;background:#5e470a"></div><div class="a" style="left:50.4px;top:192.1px;width:7px;height:1px;background:#5e470a"></div><div class="a" style="left:50.4px;top:208.3px;width:7px;height:1px;background:#5e470a"></div><div class="a" style="left:50.4px;top:216.3px;width:7px;height:1px;background:#5e470a"></div><div class="a" style="left:50.4px;top:224.4px;width:7px;height:1px;background:#5e470a"></div><div class="a" style="left:50.4px;top:240.5px;width:7px;height:1px;background:#5e470a"></div><div class="a" style="left:50.4px;top:248.6px;width:7px;height:1px;background:#5e470a"></div><div class="a" style="left:50.4px;top:256.6px;width:7px;height:1px;background:#5e470a"></div>
<div class="a" style="left:50.4px;top:265.7px;width:1px;height:4px;background:#a88418"></div><div class="a" style="left:57.6px;top:265.7px;width:1px;height:2px;background:#a88418"></div><div class="a" style="left:64.8px;top:265.7px;width:1px;height:2px;background:#a88418"></div><div class="a" style="left:72.1px;top:265.7px;width:1px;height:2px;background:#a88418"></div><div class="a" style="left:79.3px;top:265.7px;width:1px;height:2px;background:#a88418"></div><div class="a" style="left:86.5px;top:265.7px;width:1px;height:2px;background:#a88418"></div><div class="a" style="left:93.8px;top:265.7px;width:1px;height:2px;background:#a88418"></div><div class="a" style="left:101.0px;top:265.7px;width:1px;height:2px;background:#a88418"></div><div class="a" style="left:108.2px;top:265.7px;width:1px;height:4px;background:#a88418"></div><div class="a" style="left:115.4px;top:265.7px;width:1px;height:2px;background:#a88418"></div><div class="a" style="left:122.7px;top:265.7px;width:1px;height:2px;background:#a88418"></div><div class="a" style="left:129.9px;top:265.7px;width:1px;height:2px;background:#a88418"></div><div class="a" style="left:137.1px;top:265.7px;width:1px;height:2px;background:#a88418"></div><div class="a" style="left:144.3px;top:265.7px;width:1px;height:2px;background:#a88418"></div><div class="a" style="left:151.5px;top:265.7px;width:1px;height:2px;background:#a88418"></div><div class="a" style="left:158.8px;top:265.7px;width:1px;height:2px;background:#a88418"></div><div class="a" style="left:166.0px;top:265.7px;width:1px;height:4px;background:#a88418"></div><div class="a" style="left:173.2px;top:265.7px;width:1px;height:2px;background:#a88418"></div><div class="a" style="left:180.4px;top:265.7px;width:1px;height:2px;background:#a88418"></div><div class="a" style="left:187.7px;top:265.7px;width:1px;height:2px;background:#a88418"></div><div class="a" style="left:194.9px;top:265.7px;width:1px;height:2px;background:#a88418"></div><div class="a" style="left:202.1px;top:265.7px;width:1px;height:2px;background:#a88418"></div><div class="a" style="left:209.3px;top:265.7px;width:1px;height:2px;background:#a88418"></div><div class="a" style="left:216.6px;top:265.7px;width:1px;height:2px;background:#a88418"></div><div class="a" style="left:223.8px;top:265.7px;width:1px;height:4px;background:#a88418"></div><div class="a" style="left:231.0px;top:265.7px;width:1px;height:2px;background:#a88418"></div><div class="a" style="left:238.2px;top:265.7px;width:1px;height:2px;background:#a88418"></div><div class="a" style="left:245.5px;top:265.7px;width:1px;height:2px;background:#a88418"></div><div class="a" style="left:252.7px;top:265.7px;width:1px;height:2px;background:#a88418"></div><div class="a" style="left:259.9px;top:265.7px;width:1px;height:2px;background:#a88418"></div><div class="a" style="left:267.1px;top:265.7px;width:1px;height:2px;background:#a88418"></div><div class="a" style="left:274.4px;top:265.7px;width:1px;height:2px;background:#a88418"></div><div class="a" style="left:281.6px;top:265.7px;width:1px;height:4px;background:#a88418"></div><div class="a" style="left:288.8px;top:265.7px;width:1px;height:2px;background:#a88418"></div><div class="a" style="left:296.0px;top:265.7px;width:1px;height:2px;background:#a88418"></div><div class="a" style="left:303.3px;top:265.7px;width:1px;height:2px;background:#a88418"></div><div class="a" style="left:310.5px;top:265.7px;width:1px;height:2px;background:#a88418"></div><div class="a" style="left:317.7px;top:265.7px;width:1px;height:2px;background:#a88418"></div><div class="a" style="left:324.9px;top:265.7px;width:1px;height:2px;background:#a88418"></div><div class="a" style="left:332.2px;top:265.7px;width:1px;height:2px;background:#a88418"></div><div class="a" style="left:339.4px;top:265.7px;width:1px;height:4px;background:#a88418"></div><div class="a" style="left:346.6px;top:265.7px;width:1px;height:2px;background:#a88418"></div><div class="a" style="left:353.8px;top:265.7px;width:1px;height:2px;background:#a88418"></div><div class="a" style="left:361.1px;top:265.7px;width:1px;height:2px;background:#a88418"></div><div class="a" style="left:368.3px;top:265.7px;width:1px;height:2px;background:#a88418"></div><div class="a" style="left:375.5px;top:265.7px;width:1px;height:2px;background:#a88418"></div><div class="a" style="left:382.7px;top:265.7px;width:1px;height:2px;background:#a88418"></div><div class="a" style="left:390.0px;top:265.7px;width:1px;height:2px;background:#a88418"></div>
<div class="a" style="left:50.4px;top:264.2px;width:20px;height:1px;background:#ddd;opacity:.8"></div><div class="a" style="left:143px;top:264.2px;width:45px;height:1px;background:#ccc;opacity:.7"></div><div class="a" style="left:262px;top:264.2px;width:34px;height:1px;background:#ccc;opacity:.7"></div>
</div>
<div class="a" style="left:7.9px;top:7.1px;width:9.2px;height:9.2px;border-radius:50%;background:#fe5f57"></div>
<div class="a" style="left:20.9px;top:7.1px;width:9.2px;height:9.2px;border-radius:50%;background:#febc2e"></div>
<div class="a" style="left:33.9px;top:7.1px;width:9.2px;height:9.2px;border-radius:50%;background:#28c840"></div>
<svg class="a" style="left:60.0px;top:5.0px;" width="18" height="15" viewBox="0 0 18 15"><rect x="1" y="5" width="11" height="8" rx="1" fill="none" stroke="#888" stroke-width="1"/><rect x="3" y="3" width="12" height="9" rx="1" fill="#1b1c20" stroke="#e8e8e8" stroke-width="1.1"/><path d="M5,10.5 l2.5,-3 l2,2 l1.5,-1.5 l2,2.5z" fill="#e8e8e8"/><circle cx="6" cy="6" r="0.9" fill="#e8e8e8"/><path d="M15.5,0.5 v3 M14,2 h3" stroke="#e8e8e8" stroke-width="0.8"/></svg>
<div class="t" style="left:84.0px;top:9.43px;font-size:9.15px;color:#e8e8e8;">Gallery</div>
<div class="a" style="left:121.0px;top:2px;width:1px;height:22px;background:#2c2d32"></div>
<svg class="a" style="left:129.0px;top:6.5px;" width="17" height="13" viewBox="0 0 17 13"><rect x="0.5" y="0.5" width="11" height="9" rx="1" fill="none" stroke="#77787d" stroke-width="1"/><path d="M2.5,7.5 l2,-3 l1.5,2 l1,-1 l1.5,2z" fill="#77787d"/><path d="M9,5 h7 v7.5 h-7z M9,7.5 h7 M9,10 h7 M11.3,5 v7.5 M13.7,5 v7.5" fill="none" stroke="#5e5f64" stroke-width="0.7"/></svg>
<div class="t" style="left:153.5px;top:9.43px;font-size:9.15px;color:#8e8e93;">LUTs</div>
<div class="a" style="left:182.0px;top:2px;width:1px;height:22px;background:#2c2d32"></div>
<svg class="a" style="left:190.5px;top:6.0px;" width="17" height="13" viewBox="0 0 17 13"><rect x="0.5" y="2.5" width="12" height="9" rx="1" fill="none" stroke="#77787d" stroke-width="1"/><path d="M3,1 L15,1.5 L15.5,10" fill="none" stroke="#5e5f64" stroke-width="0.9"/><path d="M2.5,9.5 l2.5,-3 l2,2 l1.5,-1.5 l2,2.5z" fill="#77787d"/></svg>
<div class="t" style="left:214.0px;top:9.43px;font-size:9.15px;color:#8e8e93;">Media Pool</div>
<div class="a" style="left:268.4px;top:2px;width:1px;height:22px;background:#2c2d32"></div>
<svg class="a" style="left:274.2px;top:8.0px;" width="19" height="10" viewBox="0 0 19 10"><path d="M0.5,0.5 h1.8 v9 h-1.8 M18.5,0.5 h-1.8 v9 h1.8" fill="none" stroke="#e8e8e8" stroke-width="1"/><rect x="4" y="1" width="11" height="8" rx="1" fill="none" stroke="#e8e8e8" stroke-width="1"/><path d="M5.5,7.5 l2.5,-3 l2,2 l1,-1 l2,2z" fill="#e8e8e8"/></svg>
<div class="t" style="left:300.0px;top:9.43px;font-size:9.15px;color:#e8e8e8;">Clips</div>
<svg class="a" style="left:323.2px;top:11.0px;" width="7.5" height="5" viewBox="0 0 7.5 5"><path d="M0.7,0.8 L3.75,4 L6.8,0.8" fill="none" stroke="#9a9a9e" stroke-width="1.1"/></svg>
<div class="t" style="left:625.5px;width:300px;text-align:center;top:7.45px;font-size:11.1px;color:#f0f0f0;font-weight:bold;letter-spacing:-0.14px">ImmersiveEdit_Iceland_Nevada (Delivery)</div>
<svg class="a" style="left:1177.5px;top:5.5px;" width="15" height="14" viewBox="0 0 15 14"><path d="M4,5.5 h-3 v8 h13 v-8 h-3" fill="none" stroke="#77787d" stroke-width="1"/><path d="M7.5,9 v-8 M5,3.5 l2.5,-2.7 l2.5,2.7" fill="none" stroke="#77787d" stroke-width="1"/></svg>
<div class="t" style="left:1200.3px;top:9.43px;font-size:9.15px;color:#8e8e93;">Quick Export</div>
<div class="a" style="left:1261.6px;top:2px;width:1px;height:22px;background:#2c2d32"></div>
<svg class="a" style="left:1270.0px;top:7.0px;" width="14" height="12" viewBox="0 0 14 12"><path d="M0,3 h6 M8,3 h3 M0,9 h3 M5,9 h9 M6.5,0 v12" stroke="#8e8e93" stroke-width="1.2" fill="none"/><path d="M8,5.2 h4 M2,6.8 h3" stroke="#8e8e93" stroke-width="1"/></svg>
<div class="t" style="left:1292.8px;top:9.43px;font-size:9.15px;color:#8e8e93;">Timeline</div>
<div class="a" style="left:1336.5px;top:2px;width:1px;height:22px;background:#2c2d32"></div>
<svg class="a" style="left:1344.5px;top:6.5px;" width="15" height="13" viewBox="0 0 15 13"><rect x="0.6" y="5" width="3.6" height="3" rx="0.8" fill="none" stroke="#e8e8e8" stroke-width="1"/><rect x="9.5" y="0.8" width="4.6" height="3.4" rx="0.8" fill="none" stroke="#e8e8e8" stroke-width="1"/><rect x="9.5" y="8.8" width="4.6" height="3.4" rx="0.8" fill="none" stroke="#e8e8e8" stroke-width="1"/><path d="M4.2,6.5 h2.6 M9.5,2.5 h-2.7 v8 h2.7" fill="none" stroke="#e8e8e8" stroke-width="1"/></svg>
<div class="t" style="left:1367.7px;top:9.43px;font-size:9.15px;color:#e8e8e8;">Nodes</div>
<div class="a" style="left:1403.0px;top:2px;width:1px;height:22px;background:#2c2d32"></div>
<svg class="a" style="left:1412.5px;top:5.5px;" width="15" height="15" viewBox="0 0 15 15"><circle cx="7.5" cy="7.5" r="6.7" fill="none" stroke="#77787d" stroke-width="1"/><text x="3.4" y="10.6" font-family="Liberation Serif" font-style="italic" font-size="8.5" fill="#8e8e93">fx</text></svg>
<div class="t" style="left:1435.0px;top:9.43px;font-size:9.15px;color:#8e8e93;">Effects</div>
<div class="a" style="left:1471.4px;top:2px;width:1px;height:22px;background:#2c2d32"></div>
<svg class="a" style="left:1479.5px;top:6.5px;" width="15" height="13" viewBox="0 0 15 13"><rect x="0.5" y="0.5" width="3.4" height="2.8" fill="none" stroke="#6e6f74" stroke-width="0.8"/><rect x="5.5" y="0.5" width="3.4" height="2.8" fill="none" stroke="#6e6f74" stroke-width="0.8"/><rect x="10.5" y="0.5" width="3.4" height="2.8" fill="none" stroke="#6e6f74" stroke-width="0.8"/><rect x="0.5" y="5.0" width="3.4" height="2.8" fill="none" stroke="#6e6f74" stroke-width="0.8"/><rect x="5.5" y="5.0" width="3.4" height="2.8" fill="none" stroke="#6e6f74" stroke-width="0.8"/><rect x="10.5" y="5.0" width="3.4" height="2.8" fill="none" stroke="#6e6f74" stroke-width="0.8"/><rect x="0.5" y="9.5" width="3.4" height="2.8" fill="none" stroke="#6e6f74" stroke-width="0.8"/><rect x="5.5" y="9.5" width="3.4" height="2.8" fill="none" stroke="#6e6f74" stroke-width="0.8"/><rect x="10.5" y="9.5" width="3.4" height="2.8" fill="none" stroke="#6e6f74" stroke-width="0.8"/></svg>
<div class="t" style="left:1502.6px;top:9.43px;font-size:9.15px;color:#8e8e93;">Lightbox</div>
<svg class="a" style="left:7.5px;top:31.6px;" width="12" height="10" viewBox="0 0 12 10"><rect x="0.5" y="0.5" width="11" height="9" rx="1" fill="none" stroke="#b8b8bc" stroke-width="1"/><rect x="1" y="1" width="3.6" height="8" fill="#b8b8bc"/></svg>
<div class="a" style="left:27.0px;top:26px;width:1px;height:22px;background:#141417"></div>
<svg class="a" style="left:34.5px;top:30.6px;" width="12" height="11" viewBox="0 0 12 11"><path d="M6,0 v6.5 M3.3,4 l2.7,2.8 l2.7,-2.8" fill="none" stroke="#8e8e93" stroke-width="1.1"/><path d="M0.8,10.5 v-2 h10.4 v2" fill="none" stroke="#8e8e93" stroke-width="1.1"/></svg>
<div class="a" style="left:54.0px;top:26px;width:1px;height:22px;background:#141417"></div>
<div class="a" style="left:101px;top:36.099999999999994px;width:75px;height:1px;background:#3a3b41;"></div>
<div class="a" style="left:95.3px;top:33.3px;width:6.6px;height:6.6px;border-radius:50%;background:#a8a8ac"></div>
<div class="a" style="left:186.6px;top:26px;width:1px;height:22px;background:#141417"></div>
<svg class="a" style="left:193.1px;top:32.1px;" width="13" height="9" viewBox="0 0 13 9"><path d="M0,1 h7 M0,4.2 h5 M0,7.4 h3" stroke="#8e8e93" stroke-width="1.1"/><path d="M10,0 v8 M7.5,5.5 l2.5,2.7 l2.5,-2.7" fill="none" stroke="#8e8e93" stroke-width="1.1"/></svg>
<div class="a" style="left:212.4px;top:26px;width:1px;height:22px;background:#141417"></div>
<svg class="a" style="left:219.8px;top:32.8px;" width="12.5" height="7.5" viewBox="0 0 12.5 7.5"><rect x="0.0" y="0.0" width="3.4" height="3.2" fill="#f0f0f0"/><rect x="4.4" y="0.0" width="3.4" height="3.2" fill="#f0f0f0"/><rect x="8.8" y="0.0" width="3.4" height="3.2" fill="#f0f0f0"/><rect x="0.0" y="4.2" width="3.4" height="3.2" fill="#f0f0f0"/><rect x="4.4" y="4.2" width="3.4" height="3.2" fill="#f0f0f0"/><rect x="8.8" y="4.2" width="3.4" height="3.2" fill="#f0f0f0"/></svg>
<svg class="a" style="left:240.9px;top:32.6px;" width="11" height="8" viewBox="0 0 11 8"><path d="M3,0.8 h8 M3,4 h8 M3,7.2 h8" stroke="#8e8e93" stroke-width="1.1"/><path d="M0,0.8 h1.5 M0,4 h1.5 M0,7.2 h1.5" stroke="#8e8e93" stroke-width="1.1"/></svg>
<div class="a" style="left:259.6px;top:26px;width:1px;height:22px;background:#141417"></div>
<svg class="a" style="left:267.9px;top:31.1px;" width="11" height="11" viewBox="0 0 11 11"><circle cx="4.5" cy="4.5" r="3.6" fill="none" stroke="#9a9a9e" stroke-width="1.2"/><path d="M7.2,7.2 L10.5,10.5" stroke="#9a9a9e" stroke-width="1.3"/></svg>
<div class="a" style="left:286.4px;top:26px;width:1px;height:22px;background:#141417"></div>
<svg class="a" style="left:295.0px;top:31.6px;" width="10" height="10" viewBox="0 0 10 10"><path d="M0.5,3.5 v-3 h3 M6.5,0.5 h3 v3 M9.5,6.5 v3 h-3 M3.5,9.5 h-3 v-3" fill="none" stroke="#77787d" stroke-width="1"/><path d="M1,1 l2.6,2.6 M9,1 l-2.6,2.6 M9,9 l-2.6,-2.6 M1,9 l2.6,-2.6" stroke="#77787d" stroke-width="0.9"/></svg>
<div class="a" style="left:313.4px;top:26px;width:1px;height:22px;background:#141417"></div>
<svg class="a" style="left:319.4px;top:34.6px;" width="14" height="4" viewBox="0 0 14 4"><circle cx="2" cy="2" r="1.3" fill="#9a9a9e"/><circle cx="7" cy="2" r="1.3" fill="#9a9a9e"/><circle cx="12" cy="2" r="1.3" fill="#9a9a9e"/></svg>
<div class="a" style="left:340.0px;top:26px;width:1px;height:22px;background:#141417"></div>
<div class="t" style="left:350.0px;top:33.35px;font-size:9.3px;color:#f0f0f0;font-weight:bold">18%</div>
<svg class="a" style="left:374.9px;top:34.1px;" width="7" height="5" viewBox="0 0 7 5"><path d="M0.7,0.8 L3.5,4 L6.3,0.8" fill="none" stroke="#9a9a9e" stroke-width="1.1"/></svg>
<div class="a" style="left:387.0px;top:26px;width:1px;height:22px;background:#141417"></div>
<div class="a" style="left:392.1px;top:31.1px;width:17px;height:11px;border-radius:2px;background:#1d1e22"></div>
<svg class="a" style="left:393.1px;top:32.1px;" width="15" height="9" viewBox="0 0 15 9"><rect x="0.5" y="0.5" width="14" height="8" fill="none" stroke="#55565b" stroke-width="0.9"/><rect x="7" y="1.5" width="4.6" height="6" fill="#77787d"/><path d="M5,0.5 v8" stroke="#55565b" stroke-width="0.8" stroke-dasharray="1.2,1"/></svg>
<div class="a" style="left:417.5px;top:31.1px;width:17px;height:11px;border-radius:2px;background:#1d1e22"></div>
<svg class="a" style="left:418.5px;top:32.1px;" width="15" height="9" viewBox="0 0 15 9"><path d="M0.5,0.5 h14 v8 h-14z M0.5,4.5 h14 M5.2,0.5 v8 M9.9,0.5 v8" fill="none" stroke="#55565b" stroke-width="0.9"/></svg>
<div class="a" style="left:442.9px;top:31.1px;width:17px;height:11px;border-radius:2px;background:#1d1e22"></div>
<svg class="a" style="left:443.9px;top:32.1px;" width="15" height="9" viewBox="0 0 15 9"><rect x="0.5" y="0.5" width="14" height="8" fill="#3a3b40"/><path d="M7.5,1.2 a3.3,3.3 0 0 1 0,6.6z" fill="#bbb"/><path d="M7.5,1.2 a3.3,3.3 0 0 0 0,6.6z" fill="#151518"/></svg>
<div class="a" style="left:464.6px;top:26px;width:1px;height:22px;background:#141417"></div>
<div class="a" style="left:472.9px;top:35.1px;width:3px;height:3px;border-radius:50%;background:#3a3b40"></div>
<div class="t" style="left:568.5px;top:32.50px;font-size:9px;color:#f0f0f0;font-weight:bold;letter-spacing:-0.18px">Ranch - URSA Cine Immersive Export</div>
<svg class="a" style="left:725.5px;top:34.1px;" width="7" height="5" viewBox="0 0 7 5"><path d="M0.7,0.8 L3.5,4 L6.3,0.8" fill="none" stroke="#9a9a9e" stroke-width="1.1"/></svg>
<div class="t" style="left:781.0px;top:33.35px;font-size:9.3px;color:#f0f0f0;font-weight:bold;letter-spacing:-0.1px">00:00:04:30</div>
<svg class="a" style="left:838.5px;top:34.1px;" width="7" height="5" viewBox="0 0 7 5"><path d="M0.7,0.8 L3.5,4 L6.3,0.8" fill="none" stroke="#9a9a9e" stroke-width="1.1"/></svg>
<div class="a" style="left:852.6px;top:26px;width:1px;height:22px;background:#141417"></div>
<svg class="a" style="left:860.5px;top:32.1px;" width="13" height="9" viewBox="0 0 13 9"><rect x="0.5" y="0.5" width="12" height="8" rx="1" fill="#3a3b40" stroke="#5e5f64" stroke-width="0.9"/><rect x="2.5" y="2.3" width="8" height="4.4" fill="#2a2b30"/></svg>
<svg class="a" style="left:880.5px;top:34.1px;" width="7" height="5" viewBox="0 0 7 5"><path d="M0.7,0.8 L3.5,4 L6.3,0.8" fill="none" stroke="#9a9a9e" stroke-width="1.1"/></svg>
<div class="a" style="left:894.0px;top:26px;width:1px;height:22px;background:#141417"></div>
<svg class="a" style="left:900.5px;top:30.6px;" width="15" height="12" viewBox="0 0 15 12"><rect x="0.8" y="1.8" width="12" height="8.4" rx="1" fill="none" stroke="#e0e0e0" stroke-width="1.1"/><path d="M0.8,4.4 h12 M3.2,1.8 v2.6 M0.8,7 h3" stroke="#e0e0e0" stroke-width="0.9"/><rect x="6.5" y="6" width="8" height="5.5" rx="1" fill="#e0e0e0"/><text x="7.3" y="10.6" font-size="4.6" font-weight="bold" fill="#25262b" font-family="Liberation Sans">HQ</text></svg>
<svg class="a" style="left:920.5px;top:34.1px;" width="7" height="5" viewBox="0 0 7 5"><path d="M0.7,0.8 L3.5,4 L6.3,0.8" fill="none" stroke="#9a9a9e" stroke-width="1.1"/></svg>
<div class="a" style="left:934.0px;top:26px;width:1px;height:22px;background:#141417"></div>
<svg class="a" style="left:941.1px;top:30.6px;" width="13" height="12" viewBox="0 0 13 12"><path d="M0.5,3 v-2.5 h2.5 M10,0.5 h2.5 v2.5 M12.5,9 v2.5 h-2.5 M3,11.5 h-2.5 v-2.5" fill="none" stroke="#6e6f74" stroke-width="1"/><path d="M3,8.5 l2,-3 l1.5,1.5 l1.5,-2.5 l2.5,4z" fill="#6e6f74"/><circle cx="4" cy="4" r="0.8" fill="#6e6f74"/></svg>
<svg class="a" style="left:960.1px;top:34.1px;" width="7" height="5" viewBox="0 0 7 5"><path d="M0.7,0.8 L3.5,4 L6.3,0.8" fill="none" stroke="#9a9a9e" stroke-width="1.1"/></svg>
<div class="a" style="left:973.0px;top:26px;width:1px;height:22px;background:#141417"></div>
<svg class="a" style="left:979.6px;top:29.6px;" width="14" height="14" viewBox="0 0 14 14"><path d="M7.5,2 a5,5 0 0 1 4.4,7.4" fill="none" stroke="#e03c8c" stroke-width="1.5"/><path d="M11.9,9.4 a5,5 0 0 1 -6.8,2" fill="none" stroke="#3c8ce0" stroke-width="1.5"/><path d="M5.1,11.4 a5,5 0 0 1 -2.4,-3" fill="none" stroke="#3cd05a" stroke-width="1.5"/><path d="M3.5,1 l0.8,2 l2,0.8 l-2,0.8 l-0.8,2 l-0.8,-2 l-2,-0.8 l2,-0.8z" fill="#f0d020"/><path d="M7.2,6 l0.5,1.2 l1.2,0.5 l-1.2,0.5 l-0.5,1.2 l-0.5,-1.2 l-1.2,-0.5 l1.2,-0.5z" fill="#f0d020"/></svg>
<div class="a" style="left:1001.0px;top:26px;width:1px;height:22px;background:#141417"></div>
<svg class="a" style="left:1008.5px;top:31.6px;" width="10" height="10" viewBox="0 0 10 10"><path d="M0.5,3.5 v-3 h3 M6.5,0.5 h3 v3 M9.5,6.5 v3 h-3 M3.5,9.5 h-3 v-3" fill="none" stroke="#77787d" stroke-width="1"/><path d="M1,1 l2.6,2.6 M9,1 l-2.6,2.6 M9,9 l-2.6,-2.6 M1,9 l2.6,-2.6" stroke="#77787d" stroke-width="0.9"/></svg>
<div class="a" style="left:1025.6px;top:26px;width:1px;height:22px;background:#141417"></div>
<svg class="a" style="left:1033.4px;top:34.6px;" width="14" height="4" viewBox="0 0 14 4"><circle cx="2" cy="2" r="1.3" fill="#9a9a9e"/><circle cx="7" cy="2" r="1.3" fill="#9a9a9e"/><circle cx="12" cy="2" r="1.3" fill="#9a9a9e"/></svg>
<div class="a" style="left:1053.7px;top:26px;width:1px;height:22px;background:#141417"></div>
<svg class="a" style="left:1062.8px;top:30.6px;" width="9" height="12" viewBox="0 0 9 12"><path d="M1,0.5 L1,10 L3.5,7.8 L5.2,11.6 L6.8,10.9 L5.1,7.2 L8.4,7z" fill="#f2f2f2"/></svg>
<svg class="a" style="left:1081.7px;top:30.6px;" width="11" height="12" viewBox="0 0 11 12"><path d="M2.5,6 L2.5,2.3 a0.8,0.8 0 0 1 1.6,0 L4.1,5 L4.3,1.2 a0.8,0.8 0 0 1 1.6,0 L5.9,5 L6.3,1.6 a0.8,0.8 0 0 1 1.6,0.1 L7.6,5.4 L8.4,3.2 a0.8,0.8 0 0 1 1.5,0.5 L8.8,8 Q8.2,11.5 5.5,11.5 Q3.4,11.5 2,9 L0.4,6.3 a0.8,0.8 0 0 1 1.3,-0.9z" fill="#9a9a9e"/></svg>
<div class="a" style="left:1100.9px;top:26px;width:1px;height:22px;background:#141417"></div>
<div class="a" style="left:1292.3px;top:34.6px;width:4px;height:4px;border-radius:50%;background:#f2f2f2"></div>
<div class="a" style="left:1306.6px;top:34.8px;width:3.6px;height:3.6px;border-radius:50%;background:#3a3b40"></div>
<div class="t" style="left:1394.2px;top:32.75px;font-size:9.5px;color:#f0f0f0;font-weight:bold">Clip</div>
<svg class="a" style="left:1416.0px;top:34.1px;" width="7" height="5" viewBox="0 0 7 5"><path d="M0.7,0.8 L3.5,4 L6.3,0.8" fill="none" stroke="#9a9a9e" stroke-width="1.1"/></svg>
<div class="a" style="left:1436px;top:36.099999999999994px;width:79px;height:1px;background:#3a3b41;"></div>
<div class="a" style="left:1429.9px;top:33.3px;width:6.6px;height:6.6px;border-radius:50%;background:#a8a8ac"></div>
<div class="a" style="left:1523.7px;top:26px;width:1px;height:22px;background:#141417"></div>
<svg class="a" style="left:1529.5px;top:34.6px;" width="14" height="4" viewBox="0 0 14 4"><circle cx="2" cy="2" r="1.3" fill="#9a9a9e"/><circle cx="7" cy="2" r="1.3" fill="#9a9a9e"/><circle cx="12" cy="2" r="1.3" fill="#9a9a9e"/></svg>
<div class="a" style="left:0px;top:48px;width:54px;height:21.5px;background:#18191c;"></div>
<div class="a" style="left:54px;top:48px;width:1px;height:339px;background:#1b1c1f;"></div>
<svg class="a" style="left:6.5px;top:54.8px;" width="11" height="8" viewBox="0 0 11 8"><rect x="0.5" y="0.5" width="10" height="7" rx="0.8" fill="none" stroke="#e8e8e8" stroke-width="1"/><path d="M2,6 l2,-2.4 l1.5,1.4 l1.2,-1 l1.8,2z" fill="#e8e8e8"/><circle cx="3" cy="2.6" r="0.7" fill="#e8e8e8"/></svg>
<div class="t" style="left:22.6px;top:55.65px;font-size:8.7px;color:#f0f0f0;">Stills 1</div>
<svg class="a" style="left:6.5px;top:76.5px;" width="11" height="8" viewBox="0 0 11 8"><rect x="0.5" y="0.5" width="10" height="7" rx="0.8" fill="none" stroke="#4e4f54" stroke-width="1"/><path d="M2,6 l2,-2.4 l1.5,1.4 l1.2,-1 l1.8,2z" fill="#4e4f54"/><circle cx="3" cy="2.6" r="0.7" fill="#4e4f54"/></svg>
<div class="t" style="left:22.6px;top:76.65px;font-size:8.7px;color:#77787d;">Stills 2</div>
<svg class="a" style="left:6.5px;top:98.2px;" width="11" height="8" viewBox="0 0 11 8"><rect x="0.5" y="1.5" width="9" height="6" rx="0.8" fill="none" stroke="#4e4f54" stroke-width="1"/><path d="M2,6 l2,-2 l1.5,1.2 l1,-0.8 l1.5,1.6z" fill="#4e4f54"/><path d="M7,0.5 h3 M8.5,0 v2" stroke="#4e4f54" stroke-width="0.8"/></svg>
<div class="t" style="left:22.6px;top:98.65px;font-size:8.7px;color:#77787d;">Pow...</div>
<div class="a" style="left:0px;top:113px;width:54px;height:1px;background:#2a2b30;"></div>
<svg class="a" style="left:6.5px;top:120.2px;" width="11" height="8" viewBox="0 0 11 8"><path d="M0.5,0.5 h10 v7 h-10z M0.5,3 h10 M0.5,5.2 h10 M3,0.5 v2.5 M5.5,0.5 v2.5 M8,0.5 v2.5" fill="none" stroke="#4e4f54" stroke-width="0.9"/></svg>
<div class="t" style="left:22.6px;top:120.65px;font-size:8.7px;color:#77787d;">Time...</div>
<div class="a" style="left:340px;top:48px;width:1px;height:339px;background:#17181b;"></div>
<div class="a" style="left:1054px;top:48px;width:1px;height:339px;background:#17181b;"></div>
<div class="a" style="left:355.6px;top:51.599999999999994px;width:70.4px;height:13px;background:#19191c;border:1px solid #303136;border-radius:2px"></div>
<div class="t" style="left:363.0px;top:54.50px;font-size:9px;color:#b8b8bc;">Timeline</div>
<svg class="a" style="left:412.5px;top:56.1px;" width="7" height="5" viewBox="0 0 7 5"><path d="M0.7,0.8 L3.5,4 L6.3,0.8" fill="none" stroke="#a0a0a4" stroke-width="1.1"/></svg>
<div class="a" style="left:436.0px;top:50px;width:1px;height:18px;background:#2c2d32"></div>
<svg class="a" style="left:446.0px;top:52.3px;" width="14" height="12" viewBox="0 0 14 12"><ellipse cx="5.5" cy="6" rx="4.5" ry="3.4" fill="none" stroke="#4b4c52" stroke-width="1"/><circle cx="5.5" cy="6" r="1.6" fill="#4b4c52"/><path d="M9,0.8 Q13.5,6 9,11.2" fill="none" stroke="#4b4c52" stroke-width="1"/><path d="M8,0.3 l1.6,0.3 l-0.7,1.5 M8,11.7 l1.6,-0.3 l-0.7,-1.5" fill="none" stroke="#4b4c52" stroke-width="0.8"/></svg>
<div class="t" style="left:466.0px;top:54.50px;font-size:9px;color:#4b4c52;">Tilt</div>
<div class="a" style="left:482.0px;top:51.599999999999994px;width:33.0px;height:13px;background:#1e1f23;border:1px solid #2a2b30;border-radius:2px"></div>
<div class="t" style="left:348.5px;width:300px;text-align:center;top:54.50px;font-size:9px;color:#3e3f45;">0.0</div>
<svg class="a" style="left:529.5px;top:51.8px;" width="15" height="13" viewBox="0 0 15 13"><ellipse cx="6.5" cy="6.5" rx="4.5" ry="3.4" fill="none" stroke="#4b4c52" stroke-width="1"/><circle cx="6.5" cy="6.5" r="1.6" fill="#4b4c52"/><path d="M6.5,0 v2 M6.5,11 v2 M12.5,6.5 h2 M0,6.5 h1" stroke="#4b4c52" stroke-width="1"/><path d="M5.5,1 l1,-1 l1,1 M5.5,12 l1,1 l1,-1 M13.5,5.5 l1,1 l-1,1" fill="none" stroke="#4b4c52" stroke-width="0.8"/></svg>
<div class="t" style="left:550.0px;top:54.50px;font-size:9px;color:#4b4c52;">Pan</div>
<div class="a" style="left:570.0px;top:51.599999999999994px;width:33.0px;height:13px;background:#1e1f23;border:1px solid #2a2b30;border-radius:2px"></div>
<div class="t" style="left:436.5px;width:300px;text-align:center;top:54.50px;font-size:9px;color:#3e3f45;">0.0</div>
<svg class="a" style="left:617.0px;top:53.8px;" width="16" height="9" viewBox="0 0 16 9"><path d="M0,8.5 Q1.5,0.5 8,0.5 Q14.5,0.5 16,8.5 L11,6.2 L8,8.6 L5,6.2Z" fill="#4b4c52"/></svg>
<div class="t" style="left:638.4px;top:54.50px;font-size:9px;color:#4b4c52;">H. FoV</div>
<div class="a" style="left:667.6px;top:51.599999999999994px;width:34.4px;height:13px;background:#1e1f23;border:1px solid #2a2b30;border-radius:2px"></div>
<div class="t" style="left:534.8px;width:300px;text-align:center;top:54.50px;font-size:9px;color:#3e3f45;">60.0</div>
<svg class="a" style="left:719.6px;top:52.3px;" width="8" height="12" viewBox="0 0 8 12"><path d="M8,0 L8,12 L0.5,6.8 L0.5,5.2Z" fill="#4b4c52"/><path d="M8,0 L8,12" stroke="#5a5b61" stroke-width="1"/></svg>
<div class="t" style="left:736.0px;top:54.50px;font-size:9px;color:#4b4c52;">V. FoV</div>
<div class="a" style="left:765.6px;top:51.599999999999994px;width:32.4px;height:13px;background:#1e1f23;border:1px solid #2a2b30;border-radius:2px"></div>
<div class="t" style="left:631.8px;width:300px;text-align:center;top:54.50px;font-size:9px;color:#3e3f45;">60.0</div>
<div class="a" style="left:340px;top:68.5px;width:714px;height:1px;background:#17181b;"></div>
<div class="a" style="left:357px;top:352.6px;width:680px;height:1px;background:#3c3d42;"></div>
<div class="a" style="left:894px;top:349px;width:2px;height:8px;background:#f2f2f2;border-radius:1px"></div>
<svg class="a" style="left:355.6px;top:369.1px;" width="14" height="9" viewBox="0 0 14 9"><rect x="0.6" y="0.6" width="12.8" height="7.8" rx="3" fill="#55565b" stroke="#c8c8cc" stroke-width="1.1"/><path d="M2.6,4 Q2.6,2.6 4,2.6 H10 Q11.4,2.6 11.4,4 Q11.4,6.4 9.6,6.4 Q8.4,6.4 7.8,5.4 Q7,4.6 6.2,5.4 Q5.6,6.4 4.4,6.4 Q2.6,6.4 2.6,4Z" fill="#1d1e22"/></svg>
<svg class="a" style="left:373.7px;top:371.6px;" width="7" height="5" viewBox="0 0 7 5"><path d="M0.7,0.8 L3.5,4 L6.3,0.8" fill="none" stroke="#8e8e93" stroke-width="1.1"/></svg>
<svg class="a" style="left:389.5px;top:368.1px;" width="12" height="11" viewBox="0 0 12 11"><path d="M6,0.6 L11.4,3.2 L6,5.8 L0.6,3.2Z" fill="none" stroke="#55565b" stroke-width="1"/><path d="M0.6,5.6 L6,8.2 L11.4,5.6 M0.6,7.8 L6,10.4 L11.4,7.8" fill="none" stroke="#55565b" stroke-width="1"/></svg>
<svg class="a" style="left:412.7px;top:368.1px;" width="13" height="11" viewBox="0 0 13 11"><path d="M0.5,3.5 h2.5 l3.5,-3 v10 l-3.5,-3 h-2.5z" fill="#f0f0f0"/><path d="M8.2,3.2 Q9.6,5.5 8.2,7.8 M9.8,1.6 Q12.4,5.5 9.8,9.4" fill="none" stroke="#f0f0f0" stroke-width="1.1"/></svg>
<svg class="a" style="left:615.7px;top:368.6px;" width="15" height="10" viewBox="0 0 15 10"><path d="M0.7,0.5 v9" stroke="#b4b4b8" stroke-width="1.4"/><path d="M8,0.5 L8,9.5 L1.6,5Z M14.6,0.5 L14.6,9.5 L8.2,5Z" fill="#b4b4b8"/></svg>
<svg class="a" style="left:643.3px;top:368.6px;" width="8" height="10" viewBox="0 0 8 10"><path d="M7.5,0.5 L7.5,9.5 L0.5,5Z" fill="#b4b4b8"/></svg>
<svg class="a" style="left:665.3px;top:368.9px;" width="9.4" height="9.4" viewBox="0 0 9.4 9.4"><rect width="9.4" height="9.4" fill="#b4b4b8"/></svg>
<svg class="a" style="left:688.6px;top:368.6px;" width="8" height="10" viewBox="0 0 8 10"><path d="M0.5,0.5 L0.5,9.5 L7.5,5Z" fill="#b4b4b8"/></svg>
<svg class="a" style="left:708.8px;top:368.6px;" width="15" height="10" viewBox="0 0 15 10"><path d="M14.3,0.5 v9" stroke="#b4b4b8" stroke-width="1.4"/><path d="M0.4,0.5 L0.4,9.5 L6.8,5Z M7,0.5 L7,9.5 L13.4,5Z" fill="#b4b4b8"/></svg>
<svg class="a" style="left:736.5px;top:367.3px;" width="15" height="12" viewBox="0 0 15 12"><path d="M9.5,2.6 H4 Q0.8,2.6 0.8,6 Q0.8,9.6 4,9.6 H11 Q14.2,9.6 14.2,6 Q14.2,4 12.6,3" fill="none" stroke="#b4b4b8" stroke-width="1.2"/><path d="M8,0.4 L10.6,2.6 L8,4.8" fill="none" stroke="#b4b4b8" stroke-width="1.2"/></svg>
<div class="t" style="right:514.0px;top:368.35px;font-size:11.3px;color:#f2f2f2;font-weight:bold;letter-spacing:-0.1px">00:00:27:86</div>
<div class="a" style="left:0px;top:386.5px;width:1550px;height:1px;background:#131316;"></div>
<svg class="a" style="left:1055px;top:48.5px" width="495" height="338" viewBox="1279 160.5 495 338"><path d="M1306.2,160.5 v338" stroke="#2c2d32" stroke-width="1"/><path d="M1342.7,160.5 v338" stroke="#2c2d32" stroke-width="1"/><path d="M1379.2,160.5 v338" stroke="#2c2d32" stroke-width="1"/><path d="M1415.7,160.5 v338" stroke="#2c2d32" stroke-width="1"/><path d="M1452.2,160.5 v338" stroke="#2c2d32" stroke-width="1"/><path d="M1488.7,160.5 v338" stroke="#2c2d32" stroke-width="1"/><path d="M1525.2,160.5 v338" stroke="#2c2d32" stroke-width="1"/><path d="M1561.7,160.5 v338" stroke="#2c2d32" stroke-width="1"/><path d="M1598.2,160.5 v338" stroke="#2c2d32" stroke-width="1"/><path d="M1634.7,160.5 v338" stroke="#2c2d32" stroke-width="1"/><path d="M1671.2,160.5 v338" stroke="#2c2d32" stroke-width="1"/><path d="M1707.7,160.5 v338" stroke="#2c2d32" stroke-width="1"/><path d="M1744.2,160.5 v338" stroke="#2c2d32" stroke-width="1"/><path d="M1279,171.9 h495" stroke="#2c2d32" stroke-width="1"/><path d="M1279,208.4 h495" stroke="#2c2d32" stroke-width="1"/><path d="M1279,244.9 h495" stroke="#2c2d32" stroke-width="1"/><path d="M1279,281.4 h495" stroke="#2c2d32" stroke-width="1"/><path d="M1279,317.9 h495" stroke="#2c2d32" stroke-width="1"/><path d="M1279,354.4 h495" stroke="#2c2d32" stroke-width="1"/><path d="M1279,390.9 h495" stroke="#2c2d32" stroke-width="1"/><path d="M1279,427.4 h495" stroke="#2c2d32" stroke-width="1"/><path d="M1279,463.9 h495" stroke="#2c2d32" stroke-width="1"/><path d="M1296,342.5 L1413,299.8" stroke="#8c8d91" stroke-width="1.4" fill="none"/><path d="M1472,299.3 L1478,299.3" stroke="#8c8d91" stroke-width="1.4" fill="none"/><path d="M1537,299.3 L1551,301.2" stroke="#8c8d91" stroke-width="1.4" fill="none"/><path d="M1409.5,378.6 L1551,320.2" stroke="#8c8d91" stroke-width="1.4" fill="none"/><path d="M1467.5,377.1 L1469,377.1" stroke="#8c8d91" stroke-width="1.4" fill="none"/><path d="M1528,377.1 L1592,374.6" stroke="#8c8d91" stroke-width="1.4" fill="none"/><path d="M1652.5,373.6 L1757,344.8" stroke="#8c8d91" stroke-width="1.4" fill="none"/><rect x="1286.3" y="335.4" width="9.6" height="17.2" rx="2.4" fill="#3a3b41" stroke="#1d1e22" stroke-width="0.8"/><circle cx="1291.1" cy="344" r="2.5" fill="#8cd611"/><rect x="1756.5" y="335.7" width="9.6" height="17.2" rx="2.4" fill="#3a3b41" stroke="#1d1e22" stroke-width="0.8"/><circle cx="1761.3" cy="344.3" r="2.5" fill="#8cd611"/><rect x="1422.3" y="289.9" width="42.90000000000009" height="37.900000000000034" rx="2.5" fill="#000" opacity=".35"/><rect x="1421.8" y="288.9" width="42.90000000000009" height="37.900000000000034" rx="2.5" fill="#33343a" stroke="#1c1d20" stroke-width="0.8"/><rect x="1423.8" y="290.7" width="38.90000000000009" height="19.6" fill="#000"/><svg x="1431.05" y="290.7" width="24.4" height="19.6" viewBox="0 0 274 274" preserveAspectRatio="none"><use href="#scD"/></svg><rect x="1423.8" y="290.7" width="38.90000000000009" height="19.6" fill="#000" opacity=".3"/><rect x="1424.3" y="311.5" width="37.90000000000009" height="1.3" fill="#6f8fc2"/><text x="1428.8" y="322.8" font-size="7.6" fill="#e0e0e0" font-family="Liberation Sans">01</text><path d="M1445.5,322.5 v-3 M1447.3,322.5 v-4.6 M1449.1,322.5 v-3.6" stroke="#e0e0e0" stroke-width="1.1"/><circle cx="1457" cy="320.3" r="3" fill="none" stroke="#e0e0e0" stroke-width="0.9"/><circle cx="1457" cy="320.3" r="0.9" fill="#e0e0e0"/><path d="M1413.8,296.69999999999993 l5,2.6 l-5,2.6z" fill="#8cd611"/><path d="M1413.8,314.09999999999997 l5,2.6 l-5,2.6z" fill="#12aef0"/><rect x="1466.9" y="296.9" width="4.8" height="4.8" fill="#8cd611"/><rect x="1466.9" y="314.3" width="4.8" height="4.8" fill="#12aef0"/><rect x="1487.2" y="289.9" width="42.899999999999864" height="37.900000000000034" rx="2.5" fill="#000" opacity=".35"/><rect x="1486.7" y="288.9" width="42.899999999999864" height="37.900000000000034" rx="2.5" fill="#33343a" stroke="#1c1d20" stroke-width="0.8"/><rect x="1488.7" y="290.7" width="38.899999999999864" height="19.6" fill="#8b8b8b"/><rect x="1489.2" y="311.5" width="37.899999999999864" height="1.3" fill="#6f8fc2"/><text x="1493.7" y="322.8" font-size="7.6" fill="#e0e0e0" font-family="Liberation Sans">02</text><path d="M1510.5,322.5 v-3 M1512.3,322.5 v-4.6 M1514.1,322.5 v-3.6" stroke="#e0e0e0" stroke-width="1.1"/><path d="M1519.5,323.5 l3.5,-3.5 m-0.8,-1.4 l2.2,2.2 m-1,-1.2 l2,-2" stroke="#e0e0e0" stroke-width="1.1" fill="none"/><path d="M1478.7,296.69999999999993 l5,2.6 l-5,2.6z" fill="#8cd611"/><path d="M1478.7,314.09999999999997 l5,2.6 l-5,2.6z" fill="#12aef0"/><rect x="1531.8" y="296.9" width="4.8" height="4.8" fill="#8cd611"/><rect x="1531.8" y="314.3" width="4.8" height="4.8" fill="#12aef0"/><rect x="1560.2" y="291.5" width="43.5" height="38.89999999999998" rx="2.5" fill="#000" opacity=".35"/><rect x="1559.7" y="290.5" width="43.5" height="38.89999999999998" rx="2.5" fill="#33343a" stroke="#1c1d20" stroke-width="0.8"/><rect x="1561.7" y="292.3" width="39.5" height="19.6" fill="#000"/><svg x="1569.25" y="292.3" width="24.4" height="19.6" viewBox="0 0 274 274" preserveAspectRatio="none"><use href="#scD"/></svg><rect x="1561.7" y="292.3" width="39.5" height="19.6" fill="#000" opacity=".3"/><rect x="1562.2" y="313.1" width="38.5" height="1.3" fill="#6f8fc2"/><text x="1566.7" y="325.4" font-size="7.6" fill="#e0e0e0" font-family="Liberation Sans">03</text><circle cx="1584" cy="322.8" r="3" fill="none" stroke="#e0e0e0" stroke-width="0.9"/><circle cx="1584" cy="322.8" r="0.8" fill="#e0e0e0"/><text x="1584.5" y="327.6" font-size="3.4" fill="#e0e0e0" font-family="Liberation Sans" font-weight="bold">HDR</text><path d="M1551.7,298.29999999999995 l5,2.6 l-5,2.6z" fill="#8cd611"/><path d="M1551.7,315.7 l5,2.6 l-5,2.6z" fill="#12aef0"/><rect x="1605.4" y="298.5" width="4.8" height="4.8" fill="#8cd611"/><rect x="1605.4" y="315.90000000000003" width="4.8" height="4.8" fill="#12aef0"/><rect x="1418.1" y="367.7" width="42.5" height="38.0" rx="2.5" fill="#000" opacity=".35"/><rect x="1417.6" y="366.7" width="42.5" height="38.0" rx="2.5" fill="#33343a" stroke="#1c1d20" stroke-width="0.8"/><rect x="1419.6" y="368.5" width="38.5" height="19.6" fill="#000"/><svg x="1426.6499999999999" y="368.5" width="24.4" height="19.6" viewBox="0 0 274 274" preserveAspectRatio="none"><use href="#scD"/></svg><rect x="1419.6" y="368.5" width="38.5" height="19.6" fill="#000" opacity=".3"/><rect x="1420.1" y="389.3" width="37.5" height="1.3" fill="#6f8fc2"/><text x="1424.6" y="400.7" font-size="7.6" fill="#e0e0e0" font-family="Liberation Sans">04</text><circle cx="1443" cy="398.2" r="3.3" fill="#e6e6e6"/><path d="M1441.4,400.2 L1443.6,396.2 M1441.2,397.8 L1443.6,397.8 M1443,397.59999999999997 L1445,400.2 M1445,397.8 L1443,400.2" stroke="#2a2b30" stroke-width="0.8" fill="none"/><path d="M1409.6,374.49999999999994 l5,2.6 l-5,2.6z" fill="#8cd611"/><path d="M1409.6,391.9 l5,2.6 l-5,2.6z" fill="#12aef0"/><rect x="1462.3" y="374.7" width="4.8" height="4.8" fill="#8cd611"/><rect x="1462.3" y="392.1" width="4.8" height="4.8" fill="#12aef0"/><text x="1426.7" y="361.2" font-size="8" fill="#d8d8d8" text-anchor="middle" font-family="Liberation Sans">PQ</text><rect x="1478.2" y="367.7" width="42.799999999999955" height="38.0" rx="2.5" fill="#000" opacity=".35"/><rect x="1477.7" y="366.7" width="42.799999999999955" height="38.0" rx="2.5" fill="#33343a" stroke="#1c1d20" stroke-width="0.8"/><rect x="1479.7" y="368.5" width="38.799999999999955" height="19.6" fill="#000"/><svg x="1486.8999999999999" y="368.5" width="24.4" height="19.6" viewBox="0 0 274 274" preserveAspectRatio="none"><use href="#scD"/></svg><rect x="1479.7" y="368.5" width="38.799999999999955" height="19.6" fill="#000" opacity=".3"/><rect x="1480.2" y="389.3" width="37.799999999999955" height="1.3" fill="#6f8fc2"/><text x="1484.7" y="400.7" font-size="7.6" fill="#e0e0e0" font-family="Liberation Sans">05</text><circle cx="1503" cy="398.2" r="3.3" fill="#e6e6e6"/><path d="M1501.4,400.2 L1503.6,396.2 M1501.2,397.8 L1503.6,397.8 M1503,397.59999999999997 L1505,400.2 M1505,397.8 L1503,400.2" stroke="#2a2b30" stroke-width="0.8" fill="none"/><path d="M1469.7,374.49999999999994 l5,2.6 l-5,2.6z" fill="#8cd611"/><path d="M1469.7,391.9 l5,2.6 l-5,2.6z" fill="#12aef0"/><rect x="1522.7" y="374.7" width="4.8" height="4.8" fill="#8cd611"/><rect x="1522.7" y="392.1" width="4.8" height="4.8" fill="#12aef0"/><text x="1500.8" y="362" font-size="8" fill="#d8d8d8" text-anchor="middle" font-family="Liberation Sans">PQ_250_...</text><rect x="1601.9" y="364.4" width="44.19999999999982" height="39.400000000000034" rx="2.5" fill="#000" opacity=".35"/><rect x="1601.4" y="363.4" width="44.19999999999982" height="39.400000000000034" rx="2.5" fill="#33343a" stroke="#c2332e" stroke-width="1.2"/><rect x="1603.4" y="365.2" width="40.19999999999982" height="19.6" fill="#000"/><svg x="1611.3" y="365.2" width="24.4" height="19.6" viewBox="0 0 274 274" preserveAspectRatio="none"><use href="#scD"/></svg><rect x="1603.4" y="365.2" width="40.19999999999982" height="19.6" fill="#000" opacity=".3"/><rect x="1603.9" y="386.0" width="39.19999999999982" height="1.3" fill="#6f8fc2"/><text x="1608.4" y="398.8" font-size="7.6" fill="#e0e0e0" font-family="Liberation Sans">06</text><circle cx="1627.5" cy="396" r="3.3" fill="#e6e6e6"/><path d="M1625.9,398 L1628.1,394 M1625.7,395.6 L1628.1,395.6 M1627.5,395.4 L1629.5,398 M1629.5,395.6 L1627.5,398" stroke="#2a2b30" stroke-width="0.8" fill="none"/><path d="M1593.4,371.19999999999993 l5,2.6 l-5,2.6z" fill="#8cd611"/><path d="M1593.4,388.59999999999997 l5,2.6 l-5,2.6z" fill="#12aef0"/><rect x="1647.8" y="371.4" width="4.8" height="4.8" fill="#8cd611"/><rect x="1647.8" y="388.8" width="4.8" height="4.8" fill="#12aef0"/><text x="1625" y="359" font-size="8" fill="#d8d8d8" text-anchor="middle" font-family="Liberation Sans">PQ_108_...</text></svg>
<div class="a" style="left:8.7px;top:393.8px;width:19.2px;height:13.8px;border-radius:2.5px;background:conic-gradient(from 0deg at 50% 50%,#b44cff 0deg,#ff3cb4 50deg,#ff7a1a 110deg,#ffb400 150deg,#40d040 215deg,#30c8a0 250deg,#2a7aff 300deg,#b44cff 360deg)"></div>
<div class="a" style="left:10.0px;top:395.1px;width:16.6px;height:11.2px;border-radius:1.6px;background:#1c1d21"></div>
<div class="t" style="left:8.7px;width:19.2px;text-align:center;top:396.1px;font-size:9.2px;color:#f2f2f2;font-weight:bold">03</div>
<div class="t" style="left:37.9px;top:395.55px;font-size:8.9px;color:#f0f0f0;font-weight:bold;letter-spacing:-0.15px">00:00:13:79</div>
<div class="t" style="right:1439.3px;top:395.50px;font-size:9px;color:#6e6f74;">V1</div>
<div class="t" style="left:9.1px;top:477.50px;font-size:9px;color:#8e8e93;">Immersive Video</div>
<div class="t" style="left:104.4px;top:477.0px;font-size:8.2px;color:#e0322e;font-weight:bold;border-bottom:1px solid #e0322e;padding-bottom:0.6px;letter-spacing:-0.3px">3D</div>
<div class="a" style="left:118.6px;top:393.8px;width:19.2px;height:13.8px;border-radius:2.5px;background:conic-gradient(from 0deg at 50% 50%,#b44cff 0deg,#ff3cb4 50deg,#ff7a1a 110deg,#ffb400 150deg,#40d040 215deg,#30c8a0 250deg,#2a7aff 300deg,#b44cff 360deg)"></div>
<div class="a" style="left:119.9px;top:395.1px;width:16.6px;height:11.2px;border-radius:1.6px;background:#1c1d21"></div>
<div class="t" style="left:118.6px;width:19.2px;text-align:center;top:396.1px;font-size:9.2px;color:#f2f2f2;font-weight:bold">04</div>
<div class="t" style="left:147.8px;top:395.55px;font-size:8.9px;color:#f0f0f0;font-weight:bold;letter-spacing:-0.15px">00:00:16:36</div>
<div class="t" style="right:1329.4px;top:395.50px;font-size:9px;color:#6e6f74;">V1</div>
<div class="t" style="left:119.0px;top:477.50px;font-size:9px;color:#8e8e93;">Immersive Video</div>
<div class="t" style="left:214.3px;top:477.0px;font-size:8.2px;color:#e0322e;font-weight:bold;border-bottom:1px solid #e0322e;padding-bottom:0.6px;letter-spacing:-0.3px">3D</div>
<div class="a" style="left:228.4px;top:393.8px;width:19.2px;height:13.8px;border-radius:2.5px;background:conic-gradient(from 0deg at 50% 50%,#b44cff 0deg,#ff3cb4 50deg,#ff7a1a 110deg,#ffb400 150deg,#40d040 215deg,#30c8a0 250deg,#2a7aff 300deg,#b44cff 360deg)"></div>
<div class="a" style="left:229.7px;top:395.1px;width:16.6px;height:11.2px;border-radius:1.6px;background:#1c1d21"></div>
<div class="t" style="left:228.4px;width:19.2px;text-align:center;top:396.1px;font-size:9.2px;color:#f2f2f2;font-weight:bold">05</div>
<div class="t" style="left:257.6px;top:395.55px;font-size:8.9px;color:#f0f0f0;font-weight:bold;letter-spacing:-0.15px">00:00:00:00</div>
<div class="t" style="right:1219.6px;top:395.50px;font-size:9px;color:#6e6f74;">V1</div>
<div class="t" style="left:228.8px;top:477.50px;font-size:9px;color:#8e8e93;">Immersive Video</div>
<div class="t" style="left:324.1px;top:477.0px;font-size:8.2px;color:#e0322e;font-weight:bold;border-bottom:1px solid #e0322e;padding-bottom:0.6px;letter-spacing:-0.3px">3D</div>
<div class="a" style="left:338.3px;top:393.8px;width:19.2px;height:13.8px;border-radius:2.5px;border:1px solid #55565b;background:#1c1d21"></div>
<div class="t" style="left:338.3px;width:19.2px;text-align:center;top:396.1px;font-size:9.2px;color:#f2f2f2;font-weight:bold">06</div>
<div class="t" style="left:367.5px;top:395.55px;font-size:8.9px;color:#f0f0f0;font-weight:bold;letter-spacing:-0.15px">00:00:00:00</div>
<div class="t" style="right:1109.7px;top:395.50px;font-size:9px;color:#6e6f74;">V2</div>
<svg class="a" style="left:430.7px;top:477.5px;" width="9" height="9" viewBox="0 0 9 9"><path d="M3,2 l1,2.4 l2.4,1 l-2.4,1 l-1,2.4 l-1,-2.4 l-2.4,-1 l2.4,-1z" fill="#f0d428"/><path d="M6.8,0 l0.6,1.4 l1.4,0.6 l-1.4,0.6 l-0.6,1.4 l-0.6,-1.4 l-1.4,-0.6 l1.4,-0.6z" fill="#f0d428"/></svg>
<div class="a" style="left:448.1px;top:393.8px;width:19.2px;height:13.8px;border-radius:2.5px;background:conic-gradient(from 0deg at 50% 50%,#b44cff 0deg,#ff3cb4 50deg,#ff7a1a 110deg,#ffb400 150deg,#40d040 215deg,#30c8a0 250deg,#2a7aff 300deg,#b44cff 360deg)"></div>
<div class="a" style="left:449.4px;top:395.1px;width:16.6px;height:11.2px;border-radius:1.6px;background:#1c1d21"></div>
<div class="t" style="left:448.1px;width:19.2px;text-align:center;top:396.1px;font-size:9.2px;color:#f2f2f2;font-weight:bold">07</div>
<div class="t" style="left:477.3px;top:395.55px;font-size:8.9px;color:#f0f0f0;font-weight:bold;letter-spacing:-0.15px">00:00:01:35</div>
<div class="t" style="right:999.9px;top:395.50px;font-size:9px;color:#6e6f74;">V1</div>
<div class="t" style="left:448.5px;top:477.50px;font-size:9px;color:#8e8e93;">Immersive Video</div>
<div class="t" style="left:543.8px;top:477.0px;font-size:8.2px;color:#e0322e;font-weight:bold;border-bottom:1px solid #e0322e;padding-bottom:0.6px;letter-spacing:-0.3px">3D</div>
<div class="a" style="left:558.0px;top:393.8px;width:19.2px;height:13.8px;border-radius:2.5px;background:conic-gradient(from 0deg at 50% 50%,#b44cff 0deg,#ff3cb4 50deg,#ff7a1a 110deg,#ffb400 150deg,#40d040 215deg,#30c8a0 250deg,#2a7aff 300deg,#b44cff 360deg)"></div>
<div class="a" style="left:559.3px;top:395.1px;width:16.6px;height:11.2px;border-radius:1.6px;background:#1c1d21"></div>
<div class="t" style="left:558.0px;width:19.2px;text-align:center;top:396.1px;font-size:9.2px;color:#f2f2f2;font-weight:bold">08</div>
<div class="t" style="left:587.2px;top:395.55px;font-size:8.9px;color:#f0f0f0;font-weight:bold;letter-spacing:-0.15px">00:00:02:74</div>
<div class="t" style="right:890.0px;top:395.50px;font-size:9px;color:#6e6f74;">V1</div>
<div class="t" style="left:558.4px;top:477.50px;font-size:9px;color:#f2f2f2;">Immersive Video</div>
<div class="t" style="left:653.7px;top:477.0px;font-size:8.2px;color:#e0322e;font-weight:bold;border-bottom:1px solid #e0322e;padding-bottom:0.6px;letter-spacing:-0.3px">3D</div>
<div class="a" style="left:557.4px;top:412px;width:107px;height:61px;border:1.6px solid #e5503c;border-radius:3px"></div>
<div class="a" style="left:667.9px;top:393.8px;width:19.2px;height:13.8px;border-radius:2.5px;background:conic-gradient(from 0deg at 50% 50%,#b44cff 0deg,#ff3cb4 50deg,#ff7a1a 110deg,#ffb400 150deg,#40d040 215deg,#30c8a0 250deg,#2a7aff 300deg,#b44cff 360deg)"></div>
<div class="a" style="left:669.2px;top:395.1px;width:16.6px;height:11.2px;border-radius:1.6px;background:#1c1d21"></div>
<div class="t" style="left:667.9px;width:19.2px;text-align:center;top:396.1px;font-size:9.2px;color:#f2f2f2;font-weight:bold">09</div>
<div class="t" style="left:697.1px;top:395.55px;font-size:8.9px;color:#f0f0f0;font-weight:bold;letter-spacing:-0.15px">00:00:04:67</div>
<div class="t" style="right:780.1px;top:395.50px;font-size:9px;color:#6e6f74;">V1</div>
<div class="t" style="left:668.3px;top:477.50px;font-size:9px;color:#8e8e93;">Immersive Video</div>
<div class="t" style="left:763.6px;top:477.0px;font-size:8.2px;color:#e0322e;font-weight:bold;border-bottom:1px solid #e0322e;padding-bottom:0.6px;letter-spacing:-0.3px">3D</div>
<div class="a" style="left:777.7px;top:393.8px;width:19.2px;height:13.8px;border-radius:2.5px;background:conic-gradient(from 0deg at 50% 50%,#b44cff 0deg,#ff3cb4 50deg,#ff7a1a 110deg,#ffb400 150deg,#40d040 215deg,#30c8a0 250deg,#2a7aff 300deg,#b44cff 360deg)"></div>
<div class="a" style="left:779.0px;top:395.1px;width:16.6px;height:11.2px;border-radius:1.6px;background:#1c1d21"></div>
<div class="t" style="left:777.7px;width:19.2px;text-align:center;top:396.1px;font-size:9.2px;color:#f2f2f2;font-weight:bold">10</div>
<div class="t" style="left:806.9px;top:395.55px;font-size:8.9px;color:#f0f0f0;font-weight:bold;letter-spacing:-0.15px">00:00:05:47</div>
<div class="t" style="right:670.3px;top:395.50px;font-size:9px;color:#6e6f74;">V1</div>
<div class="t" style="left:778.1px;top:477.50px;font-size:9px;color:#8e8e93;">Immersive Video</div>
<div class="t" style="left:873.4px;top:477.0px;font-size:8.2px;color:#e0322e;font-weight:bold;border-bottom:1px solid #e0322e;padding-bottom:0.6px;letter-spacing:-0.3px">3D</div>
<div class="a" style="left:887.6px;top:393.8px;width:19.2px;height:13.8px;border-radius:2.5px;background:conic-gradient(from 0deg at 50% 50%,#b44cff 0deg,#ff3cb4 50deg,#ff7a1a 110deg,#ffb400 150deg,#40d040 215deg,#30c8a0 250deg,#2a7aff 300deg,#b44cff 360deg)"></div>
<div class="a" style="left:888.9px;top:395.1px;width:16.6px;height:11.2px;border-radius:1.6px;background:#1c1d21"></div>
<div class="t" style="left:887.6px;width:19.2px;text-align:center;top:396.1px;font-size:9.2px;color:#f2f2f2;font-weight:bold">11</div>
<div class="t" style="left:916.8px;top:395.55px;font-size:8.9px;color:#f0f0f0;font-weight:bold;letter-spacing:-0.15px">00:00:00:00</div>
<div class="t" style="right:560.4px;top:395.50px;font-size:9px;color:#6e6f74;">V1</div>
<div class="t" style="left:888.0px;top:477.50px;font-size:9px;color:#8e8e93;">Immersive Video</div>
<div class="t" style="left:983.3px;top:477.0px;font-size:8.2px;color:#e0322e;font-weight:bold;border-bottom:1px solid #e0322e;padding-bottom:0.6px;letter-spacing:-0.3px">3D</div>
<div class="a" style="left:997.4px;top:393.8px;width:19.2px;height:13.8px;border-radius:2.5px;background:conic-gradient(from 0deg at 50% 50%,#b44cff 0deg,#ff3cb4 50deg,#ff7a1a 110deg,#ffb400 150deg,#40d040 215deg,#30c8a0 250deg,#2a7aff 300deg,#b44cff 360deg)"></div>
<div class="a" style="left:998.7px;top:395.1px;width:16.6px;height:11.2px;border-radius:1.6px;background:#1c1d21"></div>
<div class="t" style="left:997.4px;width:19.2px;text-align:center;top:396.1px;font-size:9.2px;color:#f2f2f2;font-weight:bold">12</div>
<div class="t" style="left:1026.6px;top:395.55px;font-size:8.9px;color:#f0f0f0;font-weight:bold;letter-spacing:-0.15px">00:00:00:34</div>
<div class="t" style="right:450.6px;top:395.50px;font-size:9px;color:#6e6f74;">V1</div>
<div class="t" style="left:997.8px;top:477.50px;font-size:9px;color:#8e8e93;">Immersive Video</div>
<div class="t" style="left:1093.1px;top:477.0px;font-size:8.2px;color:#e0322e;font-weight:bold;border-bottom:1px solid #e0322e;padding-bottom:0.6px;letter-spacing:-0.3px">3D</div>
<div class="a" style="left:1107.3px;top:393.8px;width:19.2px;height:13.8px;border-radius:2.5px;background:conic-gradient(from 0deg at 50% 50%,#b44cff 0deg,#ff3cb4 50deg,#ff7a1a 110deg,#ffb400 150deg,#40d040 215deg,#30c8a0 250deg,#2a7aff 300deg,#b44cff 360deg)"></div>
<div class="a" style="left:1108.6px;top:395.1px;width:16.6px;height:11.2px;border-radius:1.6px;background:#1c1d21"></div>
<div class="t" style="left:1107.3px;width:19.2px;text-align:center;top:396.1px;font-size:9.2px;color:#f2f2f2;font-weight:bold">13</div>
<div class="t" style="left:1136.5px;top:395.55px;font-size:8.9px;color:#f0f0f0;font-weight:bold;letter-spacing:-0.15px">00:00:03:60</div>
<div class="t" style="right:340.7px;top:395.50px;font-size:9px;color:#6e6f74;">V1</div>
<div class="t" style="left:1107.7px;top:477.50px;font-size:9px;color:#8e8e93;">Immersive Video</div>
<div class="t" style="left:1203.0px;top:477.0px;font-size:8.2px;color:#e0322e;font-weight:bold;border-bottom:1px solid #e0322e;padding-bottom:0.6px;letter-spacing:-0.3px">3D</div>
<div class="a" style="left:1217.2px;top:393.8px;width:19.2px;height:13.8px;border-radius:2.5px;background:conic-gradient(from 0deg at 50% 50%,#b44cff 0deg,#ff3cb4 50deg,#ff7a1a 110deg,#ffb400 150deg,#40d040 215deg,#30c8a0 250deg,#2a7aff 300deg,#b44cff 360deg)"></div>
<div class="a" style="left:1218.5px;top:395.1px;width:16.6px;height:11.2px;border-radius:1.6px;background:#1c1d21"></div>
<div class="t" style="left:1217.2px;width:19.2px;text-align:center;top:396.1px;font-size:9.2px;color:#f2f2f2;font-weight:bold">14</div>
<div class="t" style="left:1246.4px;top:395.55px;font-size:8.9px;color:#f0f0f0;font-weight:bold;letter-spacing:-0.15px">00:00:05:72</div>
<div class="t" style="right:230.8px;top:395.50px;font-size:9px;color:#6e6f74;">V1</div>
<div class="t" style="left:1217.6px;top:477.50px;font-size:9px;color:#8e8e93;">Immersive Video</div>
<div class="t" style="left:1312.9px;top:477.0px;font-size:8.2px;color:#e0322e;font-weight:bold;border-bottom:1px solid #e0322e;padding-bottom:0.6px;letter-spacing:-0.3px">3D</div>
<div class="a" style="left:1327.0px;top:393.8px;width:19.2px;height:13.8px;border-radius:2.5px;background:conic-gradient(from 0deg at 50% 50%,#b44cff 0deg,#ff3cb4 50deg,#ff7a1a 110deg,#ffb400 150deg,#40d040 215deg,#30c8a0 250deg,#2a7aff 300deg,#b44cff 360deg)"></div>
<div class="a" style="left:1328.3px;top:395.1px;width:16.6px;height:11.2px;border-radius:1.6px;background:#1c1d21"></div>
<div class="t" style="left:1327.0px;width:19.2px;text-align:center;top:396.1px;font-size:9.2px;color:#f2f2f2;font-weight:bold">15</div>
<div class="t" style="left:1356.2px;top:395.55px;font-size:8.9px;color:#f0f0f0;font-weight:bold;letter-spacing:-0.15px">00:00:00:00</div>
<div class="t" style="right:121.0px;top:395.50px;font-size:9px;color:#6e6f74;">V1</div>
<div class="t" style="left:1327.4px;top:477.50px;font-size:9px;color:#8e8e93;">Immersive Video</div>
<div class="t" style="left:1422.7px;top:477.0px;font-size:8.2px;color:#e0322e;font-weight:bold;border-bottom:1px solid #e0322e;padding-bottom:0.6px;letter-spacing:-0.3px">3D</div>
<div class="a" style="left:1436.9px;top:393.8px;width:19.2px;height:13.8px;border-radius:2.5px;background:conic-gradient(from 0deg at 50% 50%,#b44cff 0deg,#ff3cb4 50deg,#ff7a1a 110deg,#ffb400 150deg,#40d040 215deg,#30c8a0 250deg,#2a7aff 300deg,#b44cff 360deg)"></div>
<div class="a" style="left:1438.2px;top:395.1px;width:16.6px;height:11.2px;border-radius:1.6px;background:#1c1d21"></div>
<div class="t" style="left:1436.9px;width:19.2px;text-align:center;top:396.1px;font-size:9.2px;color:#f2f2f2;font-weight:bold">16</div>
<div class="t" style="left:1466.1px;top:395.55px;font-size:8.9px;color:#f0f0f0;font-weight:bold;letter-spacing:-0.15px">00:00:01:08</div>
<div class="t" style="right:11.1px;top:395.50px;font-size:9px;color:#6e6f74;">V1</div>
<div class="t" style="left:1437.3px;top:477.50px;font-size:9px;color:#8e8e93;">Immersive Video</div>
<div class="t" style="left:1532.6px;top:477.0px;font-size:8.2px;color:#e0322e;font-weight:bold;border-bottom:1px solid #e0322e;padding-bottom:0.6px;letter-spacing:-0.3px">3D</div>
<div class="a" style="left:0px;top:413px;width:4.4px;height:59px;background:#000;border-radius:0 2px 2px 0"></div>
<div class="t" style="left:-2.5px;top:477.0px;font-size:8.2px;color:#e0322e;font-weight:bold;border-bottom:1px solid #e0322e;padding-bottom:0.6px;letter-spacing:-0.3px">3D</div>
<div class="a" style="left:1547px;top:413px;width:3px;height:59px;background:#000;"></div>
<div class="a" style="left:1547px;top:394px;width:3px;height:13.5px;background:#40d040;border-radius:2px 0 0 2px"></div>
<div class="t" style="left:1547.0px;top:478.50px;font-size:9px;color:#8e8e93;">I</div>
<div class="a" style="left:133.4px;top:489.20000000000005px;width:946px;height:5px;border-radius:2.5px;background:#5e6169"></div>
<div class="a" style="left:0px;top:497.5px;width:1550px;height:1px;background:#17181b;"></div>
<svg class="a" style="left:12.0px;top:508.5px;" width="20" height="15" viewBox="0 0 20 15"><rect x="6" y="3" width="10" height="8" rx="1" fill="none" stroke="#6a6b70" stroke-width="1"/><path d="M16,5 l3,-1.5 v7 l-3,-1.5" fill="none" stroke="#6a6b70" stroke-width="1"/><path d="M8,3 l1,-2 h4 l1,2" fill="none" stroke="#6a6b70" stroke-width="1"/><circle cx="4.5" cy="10.5" r="3" fill="none" stroke="#6a6b70" stroke-width="1" stroke-dasharray="2,1.2"/></svg>
<div class="a" style="left:43.5px;top:504px;width:1px;height:24px;background:#3a3b40"></div>
<svg class="a" style="left:57.5px;top:509.5px;" width="17" height="13" viewBox="0 0 17 13"><path d="M0.5,3.5 v-3 h3 M13.5,0.5 h3 v3 M16.5,9.5 v3 h-3 M3.5,12.5 h-3 v-3" fill="none" stroke="#6a6b70" stroke-width="1"/><rect x="3.2" y="3.4" width="1.7" height="1.5" fill="#6a6b70"/><rect x="6.2" y="3.4" width="1.7" height="1.5" fill="#6a6b70"/><rect x="9.2" y="3.4" width="1.7" height="1.5" fill="#6a6b70"/><rect x="12.2" y="3.4" width="1.7" height="1.5" fill="#6a6b70"/><rect x="3.2" y="6.199999999999999" width="1.7" height="1.5" fill="#6a6b70"/><rect x="6.2" y="6.199999999999999" width="1.7" height="1.5" fill="#6a6b70"/><rect x="9.2" y="6.199999999999999" width="1.7" height="1.5" fill="#6a6b70"/><rect x="12.2" y="6.199999999999999" width="1.7" height="1.5" fill="#6a6b70"/><rect x="3.2" y="9.0" width="1.7" height="1.5" fill="#6a6b70"/><rect x="6.2" y="9.0" width="1.7" height="1.5" fill="#6a6b70"/><rect x="9.2" y="9.0" width="1.7" height="1.5" fill="#6a6b70"/><rect x="12.2" y="9.0" width="1.7" height="1.5" fill="#6a6b70"/></svg>
<div class="a" style="left:87.0px;top:504px;width:1px;height:24px;background:#3a3b40"></div>
<svg class="a" style="left:100.5px;top:508.5px;" width="15" height="15" viewBox="0 0 15 15"><circle cx="7.5" cy="7.5" r="6.4" fill="none" stroke="#f2f2f2" stroke-width="1.3"/><circle cx="7.5" cy="7.5" r="1.7" fill="#f2f2f2"/></svg>
<div class="a" style="left:130.0px;top:504px;width:1px;height:24px;background:#3a3b40"></div>
<svg class="a" style="left:143.0px;top:509.0px;" width="18" height="15" viewBox="0 0 18 15"><path d="M12.6,9.5 A6,6 0 1 0 7,13" fill="none" stroke="#6a6b70" stroke-width="1.1"/><circle cx="7" cy="7" r="1.4" fill="#6a6b70"/><text x="7.6" y="14.4" font-size="5.2" font-weight="bold" fill="#6a6b70" font-family="Liberation Sans">HDR</text></svg>
<div class="a" style="left:173.0px;top:504px;width:1px;height:24px;background:#3a3b40"></div>
<svg class="a" style="left:187.1px;top:509.0px;" width="15" height="14" viewBox="0 0 15 14"><circle cx="9" cy="3.4" r="2.6" fill="#6a6b70"/><circle cx="5.4" cy="10" r="2.2" fill="none" stroke="#6a6b70" stroke-width="1.1"/><circle cx="12" cy="10.4" r="2.4" fill="#4a4b50"/><path d="M0.6,5.4 h3 M2.1,3.9 v3" stroke="#6a6b70" stroke-width="0.9"/></svg>
<div class="a" style="left:217.0px;top:504px;width:1px;height:24px;background:#3a3b40"></div>
<svg class="a" style="left:230.0px;top:510.0px;" width="18" height="12" viewBox="0 0 18 12"><rect x="5" y="0.6" width="12.4" height="10.8" rx="1" fill="none" stroke="#6a6b70" stroke-width="1"/><path d="M7,9.4 l2.6,-3.4 l2,2 l1.4,-1.4 l2.4,2.8z" fill="#6a6b70"/><path d="M0,2.6 h5 M1.6,6 h3.4 M0,9.4 h5" stroke="#6a6b70" stroke-width="0.9"/></svg>
<div class="a" style="left:644.4px;top:504px;width:1px;height:24px;background:#3a3b40"></div>
<div class="a" style="left:687.9px;top:504px;width:1px;height:24px;background:#3a3b40"></div>
<div class="a" style="left:731.8px;top:504px;width:1px;height:24px;background:#3a3b40"></div>
<div class="a" style="left:775.2px;top:504px;width:1px;height:24px;background:#3a3b40"></div>
<div class="a" style="left:818.6px;top:504px;width:1px;height:24px;background:#3a3b40"></div>
<div class="a" style="left:862.2px;top:504px;width:1px;height:24px;background:#3a3b40"></div>
<div class="a" style="left:905.7px;top:504px;width:1px;height:24px;background:#3a3b40"></div>
<div class="a" style="left:948.8px;top:504px;width:1px;height:24px;background:#3a3b40"></div>
<div class="a" style="left:991.6px;top:504px;width:1px;height:24px;background:#3a3b40"></div>
<div class="a" style="left:1034.9px;top:504px;width:1px;height:24px;background:#3a3b40"></div>
<svg class="a" style="left:614.7px;top:509.5px;" width="16" height="13" viewBox="0 0 16 13"><path d="M0.5,0.5 h15 v12 h-15z M5.5,0.5 v12 M10.5,0.5 v12 M0.5,4.5 h15 M0.5,8.5 h15" fill="none" stroke="#45464b" stroke-width="0.8"/><path d="M1,12 Q7,11 9,6 Q11,2 15.5,1" fill="none" stroke="#6a6b70" stroke-width="1.2"/></svg>
<svg class="a" style="left:657.5px;top:510.0px;" width="17" height="12" viewBox="0 0 17 12"><path d="M4.5,1 Q8,5.5 8,7.6 A3.5,3.5 0 0 1 1,7.6 Q1,5.5 4.5,1Z" fill="none" stroke="#6a6b70" stroke-width="1.1"/><path d="M10,2 v9 M12,2 v9 M14,2 v9 M16,2 v9" stroke="#4e4f54" stroke-width="0.9" stroke-dasharray="1.2,1"/></svg>
<svg class="a" style="left:701.2px;top:508.5px;" width="17" height="15" viewBox="0 0 17 15"><path d="M8.5,0.8 L15.2,4.2 L15.2,10.8 L8.5,14.2 L1.8,10.8 L1.8,4.2Z" fill="none" stroke="#f2f2f2" stroke-width="1"/><path d="M1.8,4.2 L15.2,10.8 M15.2,4.2 L1.8,10.8 M8.5,0.8 V14.2 M5.1,2.5 L11.9,12.5 M11.9,2.5 L5.1,12.5 M1.8,7.5 H15.2" stroke="#f2f2f2" stroke-width="0.7"/></svg>
<svg class="a" style="left:747.3px;top:509.5px;" width="13" height="13" viewBox="0 0 13 13"><path d="M1,12 L6.6,6.4 M5.4,4.6 L8.4,7.6 M7,6 L10.4,2.6 a1.4,1.4 0 0 0 -2,-2 L5,4" fill="none" stroke="#6a6b70" stroke-width="1.4" stroke-linecap="round"/></svg>
<svg class="a" style="left:788.2px;top:509.5px;" width="17" height="13" viewBox="0 0 17 13"><ellipse cx="8.5" cy="6.5" rx="6.2" ry="4.8" fill="none" stroke="#6a6b70" stroke-width="1.1"/><path d="M8.5,0 v2.4 M8.5,10.6 v2.4 M0,6.5 h2.6 M14.4,6.5 h2.6" stroke="#6a6b70" stroke-width="1.1"/></svg>
<svg class="a" style="left:832.9px;top:509.5px;" width="15" height="13" viewBox="0 0 15 13"><path d="M0.5,3.5 v-3 h3 M11.5,0.5 h3 v3 M14.5,9.5 v3 h-3 M3.5,12.5 h-3 v-3" fill="none" stroke="#6a6b70" stroke-width="1"/><circle cx="7.5" cy="6.5" r="2.6" fill="none" stroke="#6a6b70" stroke-width="1"/><path d="M7.5,2.4 v1.6 M7.5,9 v1.6 M3.4,6.5 h1.6 M10,6.5 h1.6" stroke="#6a6b70" stroke-width="0.9"/></svg>
<svg class="a" style="left:875.0px;top:509.5px;" width="18" height="13" viewBox="0 0 18 13"><rect x="3" y="2.4" width="14.4" height="10" fill="#3a3b40" stroke="#55565b" stroke-width="0.8"/><path d="M0.4,0.6 h13" stroke="#4e4f54" stroke-width="0.9" stroke-dasharray="1.4,1"/><path d="M0.6,0.6 v9" stroke="#4e4f54" stroke-width="0.9" stroke-dasharray="1.4,1"/><circle cx="10.2" cy="6.4" r="1.6" fill="#6a6b70"/><path d="M6.8,11.4 q0,-3 3.4,-3 q3.4,0 3.4,3z" fill="#6a6b70"/></svg>
<svg class="a" style="left:920.3px;top:509.5px;" width="14" height="13" viewBox="0 0 14 13"><path d="M3.4,0.6 Q6,4 6,5.8 A2.6,2.6 0 0 1 0.8,5.8 Q0.8,4 3.4,0.6Z" fill="#6a6b70"/><path d="M9.4,4.6 L13.6,12.4 L5.2,12.4Z" fill="#6a6b70"/></svg>
<svg class="a" style="left:961.2px;top:509.0px;" width="18" height="14" viewBox="0 0 18 14"><rect x="0.5" y="0.5" width="17" height="13" fill="#3c3d42"/><rect x="3" y="3.4" width="12.4" height="8.6" fill="#7a7b80"/><circle cx="11" cy="8.4" r="2.8" fill="#2a2b30"/></svg>
<svg class="a" style="left:1004.0px;top:509.0px;" width="18" height="14" viewBox="0 0 18 14"><rect x="2" y="3" width="14" height="8" fill="#3c3d42" stroke="#55565b" stroke-width="0.8"/><path d="M3,0.8 h10 l2.6,2.4 M15,13.2 h-10 l-2.6,-2.4" fill="none" stroke="#6a6b70" stroke-width="1"/><path d="M13,0 l2.8,3.2 l-3.6,0.4z M5,14 l-2.8,-3.2 l3.6,-0.4z" fill="#6a6b70"/></svg>
<svg class="a" style="left:1049.3px;top:511.0px;" width="15" height="10" viewBox="0 0 15 10"><rect x="0.5" y="0.5" width="14" height="9" rx="1.2" fill="#36373c" stroke="#55565b" stroke-width="0.9"/><text x="2.6" y="7.6" font-size="6.4" font-weight="bold" fill="#6a6b70" font-family="Liberation Sans">3D</text></svg>
<svg class="a" style="left:1435.5px;top:511.5px;" width="17" height="9" viewBox="0 0 17 9"><path d="M12,0.5 L16,4.5 L12,8.5 L8,4.5Z" fill="#55565b"/><path d="M7.5,0.8 L3.8,4.5 L7.5,8.2 M4.2,0.8 L0.6,4.5 L4.2,8.2" fill="none" stroke="#4a4b50" stroke-width="1.1"/></svg>
<div class="a" style="left:1464.4px;top:504px;width:1px;height:24px;background:#3a3b40"></div>
<svg class="a" style="left:1477.0px;top:509.5px;" width="16" height="13" viewBox="0 0 16 13"><path d="M0.8,0 v12.2 h15" fill="none" stroke="#f2f2f2" stroke-width="1.3"/><path d="M2.6,10.4 L4.4,4 L6,9 L7.8,2.4 L9.4,8.4 L11,5 L12.6,9.4 L14.6,6.4" fill="none" stroke="#f2f2f2" stroke-width="1.1"/></svg>
<div class="a" style="left:1506.5px;top:504px;width:1px;height:24px;background:#3a3b40"></div>
<svg class="a" style="left:1521.7px;top:509.0px;" width="14" height="14" viewBox="0 0 14 14"><circle cx="7" cy="7" r="6.2" fill="none" stroke="#8e8e93" stroke-width="1.1"/><path d="M7,6 v4.4" stroke="#8e8e93" stroke-width="1.4"/><circle cx="7" cy="3.8" r="0.9" fill="#8e8e93"/></svg>
<div class="a" style="left:0px;top:533.5px;width:1550px;height:1px;background:#131316;"></div>
<div class="a" style="left:0px;top:555.5px;width:1550px;height:1px;background:#141417;"></div>
<div class="a" style="left:580px;top:534px;width:2px;height:303px;background:#131316;"></div>
<div class="a" style="left:1160.6px;top:534px;width:1.6px;height:303px;background:#131316;"></div>
<div class="t" style="left:7.7px;top:540.75px;font-size:9.5px;color:#f2f2f2;font-weight:bold;letter-spacing:-0.08px">Primaries - Color Wheels</div>
<div class="a" style="left:485.6px;top:535px;width:1px;height:20px;background:#141417"></div>
<svg class="a" style="left:493.0px;top:539.2px;" width="12" height="12" viewBox="0 0 12 12"><circle cx="6" cy="6" r="5.2" fill="none" stroke="#f2f2f2" stroke-width="1.1"/><circle cx="6" cy="6" r="1.4" fill="#f2f2f2"/></svg>
<svg class="a" style="left:514.8px;top:540.7px;" width="10" height="9" viewBox="0 0 10 9"><path d="M1,0 v9 M3.7,0 v9 M6.4,0 v9 M9.1,0 v9" stroke="#6e6f74" stroke-width="1.1"/></svg>
<svg class="a" style="left:533.5px;top:539.2px;" width="13" height="12" viewBox="0 0 13 12"><path d="M9.8,7.4 A4.6,4.6 0 1 0 5.4,10.4" fill="none" stroke="#6e6f74" stroke-width="1"/><circle cx="5.4" cy="5.6" r="1" fill="#6e6f74"/><text x="6.4" y="11.6" font-size="3.6" font-weight="bold" fill="#6e6f74" font-family="Liberation Sans">LOG</text></svg>
<div class="a" style="left:554.4px;top:535px;width:1px;height:20px;background:#141417"></div>
<svg class="a" style="left:562.3px;top:539.7px;" width="11" height="11" viewBox="0 0 11 11"><path d="M2.2,3 A4.6,4.6 0 1 1 1,6.2" fill="none" stroke="#6e6f74" stroke-width="1"/><path d="M0.4,0.8 L1.8,3.6 L4.8,2.8" fill="none" stroke="#6e6f74" stroke-width="1"/><circle cx="5.6" cy="6.2" r="0.9" fill="#6e6f74"/></svg>
<div class="t" style="left:588.2px;top:540.75px;font-size:9.5px;color:#f2f2f2;font-weight:bold;letter-spacing:-0.08px">Color Warper - Chroma Warp</div>
<div class="a" style="left:1007.0px;top:535px;width:1px;height:20px;background:#141417"></div>
<svg class="a" style="left:1014.8px;top:539.2px;" width="12" height="12" viewBox="0 0 12 12"><path d="M0.6,1 L11.4,3.4 L4.4,11.4Z" fill="none" stroke="#f2f2f2" stroke-width="1.1"/><path d="M0.6,1 L8,7.4 M4,1.8 L6.4,9 M8,2.6 L2.6,6.4 M11.4,3.4 L3.4,8.8" stroke="#f2f2f2" stroke-width="0.7"/></svg>
<div class="a" style="left:1034.0px;top:538px;width:1px;height:14px;background:#3a3b40"></div>
<svg class="a" style="left:1041.4px;top:539.2px;" width="12" height="12" viewBox="0 0 12 12"><circle cx="6" cy="6" r="5.2" fill="none" stroke="#6e6f74" stroke-width="1"/><path d="M6,0.8 V11.2 M1.5,3.4 L10.5,8.6 M10.5,3.4 L1.5,8.6" stroke="#6e6f74" stroke-width="0.8"/></svg>
<svg class="a" style="left:1062.3px;top:539.7px;" width="11" height="11" viewBox="0 0 11 11"><path d="M0.5,0.5 h10 v10 h-10z M0.5,3.8 h10 M0.5,7.2 h10 M3.8,0.5 v10 M7.2,0.5 v10" fill="none" stroke="#6e6f74" stroke-width="0.9"/></svg>
<div class="a" style="left:1082.0px;top:535px;width:1px;height:20px;background:#141417"></div>
<svg class="a" style="left:1090.4px;top:540.2px;" width="10" height="10" viewBox="0 0 10 10"><path d="M0.5,3.5 v-3 h3 M6.5,0.5 h3 v3 M9.5,6.5 v3 h-3 M3.5,9.5 h-3 v-3" fill="none" stroke="#77787d" stroke-width="1"/><path d="M1,1 l2.6,2.6 M9,1 l-2.6,2.6 M9,9 l-2.6,-2.6 M1,9 l2.6,-2.6" stroke="#77787d" stroke-width="0.9"/></svg>
<div class="a" style="left:1108.0px;top:535px;width:1px;height:20px;background:#141417"></div>
<svg class="a" style="left:1116.7px;top:539.7px;" width="11" height="11" viewBox="0 0 11 11"><path d="M2.2,3 A4.6,4.6 0 1 1 1,6.2" fill="none" stroke="#6e6f74" stroke-width="1"/><path d="M0.4,0.8 L1.8,3.6 L4.8,2.8" fill="none" stroke="#6e6f74" stroke-width="1"/><circle cx="5.6" cy="6.2" r="0.9" fill="#6e6f74"/></svg>
<div class="a" style="left:1135.0px;top:535px;width:1px;height:20px;background:#141417"></div>
<svg class="a" style="left:1141.8px;top:543.2px;" width="14" height="4" viewBox="0 0 14 4"><circle cx="2" cy="2" r="1.3" fill="#9a9a9e"/><circle cx="7" cy="2" r="1.3" fill="#9a9a9e"/><circle cx="12" cy="2" r="1.3" fill="#9a9a9e"/></svg>
<div class="t" style="left:1169.8px;top:540.75px;font-size:9.5px;color:#f2f2f2;font-weight:bold">Scopes</div>
<div class="t" style="left:1420.0px;top:540.75px;font-size:9.5px;color:#f2f2f2;font-weight:bold">Parade</div>
<svg class="a" style="left:1456.5px;top:543.0px;" width="7" height="5" viewBox="0 0 7 5"><path d="M0.7,0.8 L3.5,4 L6.3,0.8" fill="none" stroke="#9a9a9e" stroke-width="1.1"/></svg>
<div class="a" style="left:1470.6px;top:535px;width:1px;height:20px;background:#141417"></div>
<svg class="a" style="left:1477.4px;top:540.2px;" width="12" height="10" viewBox="0 0 12 10"><path d="M0,1.6 h12 M0,5 h12 M0,8.4 h12" stroke="#6e6f74" stroke-width="0.9"/><circle cx="8" cy="1.6" r="1.4" fill="#1f2025" stroke="#6e6f74" stroke-width="0.9"/><circle cx="3.6" cy="5" r="1.4" fill="#1f2025" stroke="#6e6f74" stroke-width="0.9"/><circle cx="7" cy="8.4" r="1.4" fill="#1f2025" stroke="#6e6f74" stroke-width="0.9"/></svg>
<div class="a" style="left:1496.0px;top:535px;width:1px;height:20px;background:#141417"></div>
<svg class="a" style="left:1504.6px;top:540.2px;" width="10" height="10" viewBox="0 0 10 10"><path d="M0.5,3.5 v-3 h3 M6.5,0.5 h3 v3 M9.5,6.5 v3 h-3 M3.5,9.5 h-3 v-3" fill="none" stroke="#77787d" stroke-width="1"/><path d="M1,1 l2.6,2.6 M9,1 l-2.6,2.6 M9,9 l-2.6,-2.6 M1,9 l2.6,-2.6" stroke="#77787d" stroke-width="0.9"/></svg>
<div class="a" style="left:1523.0px;top:535px;width:1px;height:20px;background:#141417"></div>
<svg class="a" style="left:1529.8px;top:543.2px;" width="14" height="4" viewBox="0 0 14 4"><circle cx="2" cy="2" r="1.3" fill="#9a9a9e"/><circle cx="7" cy="2" r="1.3" fill="#9a9a9e"/><circle cx="12" cy="2" r="1.3" fill="#9a9a9e"/></svg>
<div class="a" style="left:0px;top:587.8px;width:580px;height:1px;background:#1f2024;"></div>
<div class="a" style="left:0px;top:804.5px;width:580px;height:1px;background:#1f2024;"></div>
<svg class="a" style="left:9.5px;top:564.9px;" width="14" height="14" viewBox="0 0 14 14"><circle cx="7" cy="7" r="6.2" fill="none" stroke="#6e6f74" stroke-width="1.1"/><text x="4.3" y="9.8" font-size="7.6" font-weight="bold" fill="#6e6f74" font-family="Liberation Sans">A</text></svg>
<svg class="a" style="left:34.4px;top:565.1px;" width="13" height="13" viewBox="0 0 13 13"><path d="M1,12 L6.4,6.6 M5,4.6 L8.4,8 M7,6 L10.4,2.6 a1.5,1.5 0 0 0 -2.1,-2.1 L5,4" fill="none" stroke="#f2f2f2" stroke-width="1.5" stroke-linecap="round"/><path d="M2.2,1 Q3.8,3.2 3.8,4 A1.6,1.6 0 0 1 0.6,4 Q0.6,3.2 2.2,1Z" fill="#f2f2f2"/></svg>
<div class="t" style="right:1429.8px;top:567.40px;font-size:9.2px;color:#77787d;">Temp</div>
<div class="a" style="left:123.8px;top:563.6px;width:33.2px;height:14.0px;background:#1c1c1f;border:1px solid #202124;border-bottom-color:#3a3b41;border-radius:2.5px"></div>
<div class="t" style="left:-9.6px;width:300px;text-align:center;top:567.40px;font-size:9.2px;color:#f0f0f0;">0.0</div>
<div class="a" style="left:128.8px;top:579.1px;width:23.2px;height:2px;border-radius:1px;background:linear-gradient(90deg,#1a6aff,#2a7aff 45%,#ff9a1a 55%,#ff9a1a)"></div>
<div class="t" style="right:1327.6px;top:567.40px;font-size:9.2px;color:#77787d;">Tint</div>
<div class="a" style="left:225.4px;top:563.6px;width:33.6px;height:14.0px;background:#1c1c1f;border:1px solid #202124;border-bottom-color:#3a3b41;border-radius:2.5px"></div>
<div class="t" style="left:92.2px;width:300px;text-align:center;top:567.40px;font-size:9.2px;color:#f0f0f0;">0.00</div>
<div class="a" style="left:230.4px;top:579.1px;width:23.6px;height:2px;border-radius:1px;background:linear-gradient(90deg,#18d850,#18d850 45%,#f020c0 55%,#f020c0)"></div>
<div class="t" style="right:1226.4px;top:567.40px;font-size:9.2px;color:#77787d;">Contrast</div>
<div class="a" style="left:327.0px;top:563.6px;width:33.2px;height:14.0px;background:#1c1c1f;border:1px solid #202124;border-bottom-color:#3a3b41;border-radius:2.5px"></div>
<div class="t" style="left:193.6px;width:300px;text-align:center;top:567.40px;font-size:9.2px;color:#f0f0f0;">1.000</div>
<div class="a" style="left:332.0px;top:579.1px;width:23.2px;height:2px;border-radius:1px;background:linear-gradient(90deg,#0a0a0a,#3a3a3a 40%,#e8e8e8)"></div>
<div class="t" style="right:1124.6px;top:567.40px;font-size:9.2px;color:#77787d;">Pivot</div>
<div class="a" style="left:428.6px;top:563.6px;width:33.0px;height:14.0px;background:#1c1c1f;border:1px solid #202124;border-bottom-color:#3a3b41;border-radius:2.5px"></div>
<div class="t" style="left:295.1px;width:300px;text-align:center;top:567.40px;font-size:9.2px;color:#f0f0f0;">0.435</div>
<div class="a" style="left:433.6px;top:579.1px;width:23.0px;height:2px;border-radius:1px;background:linear-gradient(90deg,#111,#3a3a3e 50%,#111)"></div>
<div class="t" style="right:1022.8px;top:567.40px;font-size:9.2px;color:#77787d;">Mid/Detail</div>
<div class="a" style="left:529.8px;top:563.6px;width:34.2px;height:14.0px;background:#1c1c1f;border:1px solid #202124;border-bottom-color:#3a3b41;border-radius:2.5px"></div>
<div class="t" style="left:396.9px;width:300px;text-align:center;top:567.40px;font-size:9.2px;color:#f0f0f0;">0.00</div>
<div class="a" style="left:534.8px;top:579.1px;width:24.2px;height:2px;border-radius:1px;background:linear-gradient(90deg,#141416,#2a2a2e 50%,#6a6a6e)"></div>
<svg class="a" style="left:32.6px;top:597.6px;" width="14" height="14" viewBox="0 0 14 14"><path d="M5.5,0 v4.2 M5.5,6.8 v4.2 M0,5.5 h4.2 M6.8,5.5 h4.2" stroke="#c8c8cc" stroke-width="1"/><circle cx="10.8" cy="10.8" r="2.2" fill="#0a0a0c"/></svg>
<svg class="a" style="left:305.6px;top:597.6px;" width="14" height="14" viewBox="0 0 14 14"><path d="M5.5,0 v4.2 M5.5,6.8 v4.2 M0,5.5 h4.2 M6.8,5.5 h4.2" stroke="#c8c8cc" stroke-width="1"/><circle cx="10.8" cy="10.8" r="2" fill="#f2f2f2"/></svg>
<div class="t" style="left:-63.0px;width:300px;text-align:center;top:599.80px;font-size:9.4px;color:#e8e8e8;">Lift</div>
<div class="t" style="left:72.6px;width:300px;text-align:center;top:599.80px;font-size:9.4px;color:#e8e8e8;">Gamma</div>
<div class="t" style="left:210.2px;width:300px;text-align:center;top:599.80px;font-size:9.4px;color:#e8e8e8;">Gain</div>
<div class="t" style="left:345.4px;width:300px;text-align:center;top:599.80px;font-size:9.4px;color:#e8e8e8;">Offset</div>
<svg class="a" style="left:129.4px;top:598.1px;" width="11" height="11" viewBox="0 0 11 11"><path d="M2.2,3 A4.6,4.6 0 1 1 1,6.2" fill="none" stroke="#6e6f74" stroke-width="1"/><path d="M0.4,0.8 L1.8,3.6 L4.8,2.8" fill="none" stroke="#6e6f74" stroke-width="1"/></svg>
<svg class="a" style="left:265.9px;top:598.1px;" width="11" height="11" viewBox="0 0 11 11"><path d="M2.2,3 A4.6,4.6 0 1 1 1,6.2" fill="none" stroke="#6e6f74" stroke-width="1"/><path d="M0.4,0.8 L1.8,3.6 L4.8,2.8" fill="none" stroke="#6e6f74" stroke-width="1"/></svg>
<svg class="a" style="left:402.4px;top:598.1px;" width="11" height="11" viewBox="0 0 11 11"><path d="M2.2,3 A4.6,4.6 0 1 1 1,6.2" fill="none" stroke="#6e6f74" stroke-width="1"/><path d="M0.4,0.8 L1.8,3.6 L4.8,2.8" fill="none" stroke="#6e6f74" stroke-width="1"/></svg>
<svg class="a" style="left:538.8px;top:598.1px;" width="11" height="11" viewBox="0 0 11 11"><path d="M2.2,3 A4.6,4.6 0 1 1 1,6.2" fill="none" stroke="#6e6f74" stroke-width="1"/><path d="M0.4,0.8 L1.8,3.6 L4.8,2.8" fill="none" stroke="#6e6f74" stroke-width="1"/></svg>
<div class="a" style="left:32.4px;top:756.6px;width:24.2px;height:14.0px;background:#1c1c1f;border:1px solid #202124;border-bottom-color:#3a3b41;border-radius:2.5px"></div>
<div class="t" style="left:-105.5px;width:300px;text-align:center;top:760.40px;font-size:9.2px;color:#f0f0f0;">0.00</div>
<div class="a" style="left:33.2px;top:772.1px;width:22.6px;height:2px;border-radius:1px;background:#e8e8e8"></div>
<div class="a" style="left:59.8px;top:756.6px;width:24.2px;height:14.0px;background:#1c1c1f;border:1px solid #202124;border-bottom-color:#3a3b41;border-radius:2.5px"></div>
<div class="t" style="left:-78.1px;width:300px;text-align:center;top:760.40px;font-size:9.2px;color:#f0f0f0;">0.00</div>
<div class="a" style="left:60.6px;top:772.1px;width:22.6px;height:2px;border-radius:1px;background:#e02020"></div>
<div class="a" style="left:87.2px;top:756.6px;width:24.2px;height:14.0px;background:#1c1c1f;border:1px solid #202124;border-bottom-color:#3a3b41;border-radius:2.5px"></div>
<div class="t" style="left:-50.7px;width:300px;text-align:center;top:760.40px;font-size:9.2px;color:#f0f0f0;">0.00</div>
<div class="a" style="left:88.0px;top:772.1px;width:22.6px;height:2px;border-radius:1px;background:#20b020"></div>
<div class="a" style="left:114.6px;top:756.6px;width:24.2px;height:14.0px;background:#1c1c1f;border:1px solid #202124;border-bottom-color:#3a3b41;border-radius:2.5px"></div>
<div class="t" style="left:-23.3px;width:300px;text-align:center;top:760.40px;font-size:9.2px;color:#f0f0f0;">0.00</div>
<div class="a" style="left:115.4px;top:772.1px;width:22.6px;height:2px;border-radius:1px;background:#2060e0"></div>
<div class="a" style="left:169.0px;top:756.6px;width:24.2px;height:14.0px;background:#1c1c1f;border:1px solid #202124;border-bottom-color:#3a3b41;border-radius:2.5px"></div>
<div class="t" style="left:31.1px;width:300px;text-align:center;top:760.40px;font-size:9.2px;color:#f0f0f0;">0.00</div>
<div class="a" style="left:169.8px;top:772.1px;width:22.6px;height:2px;border-radius:1px;background:#e8e8e8"></div>
<div class="a" style="left:196.4px;top:756.6px;width:24.2px;height:14.0px;background:#1c1c1f;border:1px solid #202124;border-bottom-color:#3a3b41;border-radius:2.5px"></div>
<div class="t" style="left:58.5px;width:300px;text-align:center;top:760.40px;font-size:9.2px;color:#f0f0f0;">0.00</div>
<div class="a" style="left:197.2px;top:772.1px;width:22.6px;height:2px;border-radius:1px;background:#e02020"></div>
<div class="a" style="left:223.8px;top:756.6px;width:24.2px;height:14.0px;background:#1c1c1f;border:1px solid #202124;border-bottom-color:#3a3b41;border-radius:2.5px"></div>
<div class="t" style="left:85.9px;width:300px;text-align:center;top:760.40px;font-size:9.2px;color:#f0f0f0;">0.00</div>
<div class="a" style="left:224.6px;top:772.1px;width:22.6px;height:2px;border-radius:1px;background:#20b020"></div>
<div class="a" style="left:251.2px;top:756.6px;width:24.2px;height:14.0px;background:#1c1c1f;border:1px solid #202124;border-bottom-color:#3a3b41;border-radius:2.5px"></div>
<div class="t" style="left:113.3px;width:300px;text-align:center;top:760.40px;font-size:9.2px;color:#f0f0f0;">0.00</div>
<div class="a" style="left:252.0px;top:772.1px;width:22.6px;height:2px;border-radius:1px;background:#2060e0"></div>
<div class="a" style="left:305.6px;top:756.6px;width:24.2px;height:14.0px;background:#1c1c1f;border:1px solid #202124;border-bottom-color:#3a3b41;border-radius:2.5px"></div>
<div class="t" style="left:167.7px;width:300px;text-align:center;top:760.40px;font-size:9.2px;color:#f0f0f0;">1.00</div>
<div class="a" style="left:306.4px;top:772.1px;width:22.6px;height:2px;border-radius:1px;background:#e8e8e8"></div>
<div class="a" style="left:333.0px;top:756.6px;width:24.2px;height:14.0px;background:#1c1c1f;border:1px solid #202124;border-bottom-color:#3a3b41;border-radius:2.5px"></div>
<div class="t" style="left:195.1px;width:300px;text-align:center;top:760.40px;font-size:9.2px;color:#f0f0f0;">1.00</div>
<div class="a" style="left:333.8px;top:772.1px;width:22.6px;height:2px;border-radius:1px;background:#e02020"></div>
<div class="a" style="left:360.4px;top:756.6px;width:24.2px;height:14.0px;background:#1c1c1f;border:1px solid #202124;border-bottom-color:#3a3b41;border-radius:2.5px"></div>
<div class="t" style="left:222.5px;width:300px;text-align:center;top:760.40px;font-size:9.2px;color:#f0f0f0;">1.00</div>
<div class="a" style="left:361.2px;top:772.1px;width:22.6px;height:2px;border-radius:1px;background:#20b020"></div>
<div class="a" style="left:387.8px;top:756.6px;width:24.2px;height:14.0px;background:#1c1c1f;border:1px solid #202124;border-bottom-color:#3a3b41;border-radius:2.5px"></div>
<div class="t" style="left:249.9px;width:300px;text-align:center;top:760.40px;font-size:9.2px;color:#f0f0f0;">1.00</div>
<div class="a" style="left:388.6px;top:772.1px;width:22.6px;height:2px;border-radius:1px;background:#2060e0"></div>
<div class="a" style="left:441.8px;top:756.6px;width:33.0px;height:14.0px;background:#1c1c1f;border:1px solid #202124;border-bottom-color:#3a3b41;border-radius:2.5px"></div>
<div class="t" style="left:308.3px;width:300px;text-align:center;top:760.40px;font-size:9.2px;color:#f0f0f0;">25.00</div>
<div class="a" style="left:447.3px;top:772.1px;width:22.0px;height:2px;border-radius:1px;background:#e02020"></div>
<div class="a" style="left:478.1px;top:756.6px;width:33.0px;height:14.0px;background:#1c1c1f;border:1px solid #202124;border-bottom-color:#3a3b41;border-radius:2.5px"></div>
<div class="t" style="left:344.6px;width:300px;text-align:center;top:760.40px;font-size:9.2px;color:#f0f0f0;">25.00</div>
<div class="a" style="left:483.6px;top:772.1px;width:22.0px;height:2px;border-radius:1px;background:#20b020"></div>
<div class="a" style="left:514.4px;top:756.6px;width:33.0px;height:14.0px;background:#1c1c1f;border:1px solid #202124;border-bottom-color:#3a3b41;border-radius:2.5px"></div>
<div class="t" style="left:380.9px;width:300px;text-align:center;top:760.40px;font-size:9.2px;color:#f0f0f0;">25.00</div>
<div class="a" style="left:519.9px;top:772.1px;width:22.0px;height:2px;border-radius:1px;background:#2060e0"></div>
<div class="a" style="left:32.0px;top:784px;width:106px;height:9.6px;border-radius:4.8px;background:#0c0c0e;box-shadow:0 0 1px #000"></div>
<div class="a" style="left:36.0px;top:786px;width:98px;height:5.6px;background:repeating-linear-gradient(90deg,#4a4b50 0,#4a4b50 0.9px,transparent 0.9px,transparent 2.5px);-webkit-mask-image:linear-gradient(90deg,transparent 0,#000 18%,#000 82%,transparent 100%);mask-image:linear-gradient(90deg,transparent 0,#000 18%,#000 82%,transparent 100%)"></div>
<div class="a" style="left:168.6px;top:784px;width:106px;height:9.6px;border-radius:4.8px;background:#0c0c0e;box-shadow:0 0 1px #000"></div>
<div class="a" style="left:172.6px;top:786px;width:98px;height:5.6px;background:repeating-linear-gradient(90deg,#4a4b50 0,#4a4b50 0.9px,transparent 0.9px,transparent 2.5px);-webkit-mask-image:linear-gradient(90deg,transparent 0,#000 18%,#000 82%,transparent 100%);mask-image:linear-gradient(90deg,transparent 0,#000 18%,#000 82%,transparent 100%)"></div>
<div class="a" style="left:305.2px;top:784px;width:106px;height:9.6px;border-radius:4.8px;background:#0c0c0e;box-shadow:0 0 1px #000"></div>
<div class="a" style="left:309.2px;top:786px;width:98px;height:5.6px;background:repeating-linear-gradient(90deg,#4a4b50 0,#4a4b50 0.9px,transparent 0.9px,transparent 2.5px);-webkit-mask-image:linear-gradient(90deg,transparent 0,#000 18%,#000 82%,transparent 100%);mask-image:linear-gradient(90deg,transparent 0,#000 18%,#000 82%,transparent 100%)"></div>
<div class="a" style="left:441.8px;top:784px;width:106px;height:9.6px;border-radius:4.8px;background:#0c0c0e;box-shadow:0 0 1px #000"></div>
<div class="a" style="left:445.8px;top:786px;width:98px;height:5.6px;background:repeating-linear-gradient(90deg,#4a4b50 0,#4a4b50 0.9px,transparent 0.9px,transparent 2.5px);-webkit-mask-image:linear-gradient(90deg,transparent 0,#000 18%,#000 82%,transparent 100%);mask-image:linear-gradient(90deg,transparent 0,#000 18%,#000 82%,transparent 100%)"></div>
<div class="t" style="left:10.0px;top:815.40px;font-size:9.2px;color:#77787d;">Color Boost</div>
<div class="a" style="left:60.4px;top:812.0px;width:32.6px;height:14.0px;background:#1c1c1f;border:1px solid #202124;border-bottom-color:#3a3b41;border-radius:2.5px"></div>
<div class="t" style="left:-73.3px;width:300px;text-align:center;top:815.40px;font-size:9.2px;color:#f0f0f0;">0.00</div>
<div class="a" style="left:65.4px;top:827.5px;width:22.6px;height:2px;border-radius:1px;background:linear-gradient(90deg,#e02020,#e0c020 25%,#20c040 50%,#2060e0 75%,#c030d0)"></div>
<div class="t" style="left:114.6px;top:815.40px;font-size:9.2px;color:#77787d;">Shadows</div>
<div class="a" style="left:154.4px;top:812.0px;width:32.6px;height:14.0px;background:#1c1c1f;border:1px solid #202124;border-bottom-color:#3a3b41;border-radius:2.5px"></div>
<div class="t" style="left:20.7px;width:300px;text-align:center;top:815.40px;font-size:9.2px;color:#f0f0f0;">0.00</div>
<div class="a" style="left:159.4px;top:827.5px;width:22.6px;height:2px;border-radius:1px;background:linear-gradient(90deg,#0a0a0a,#1a1a1c)"></div>
<div class="t" style="left:204.6px;top:815.40px;font-size:9.2px;color:#77787d;">Highlights</div>
<div class="a" style="left:248.4px;top:812.0px;width:32.6px;height:14.0px;background:#1c1c1f;border:1px solid #202124;border-bottom-color:#3a3b41;border-radius:2.5px"></div>
<div class="t" style="left:114.7px;width:300px;text-align:center;top:815.40px;font-size:9.2px;color:#f0f0f0;">0.00</div>
<div class="a" style="left:253.4px;top:827.5px;width:22.6px;height:2px;border-radius:1px;background:linear-gradient(90deg,#b0b0b0,#f2f2f2)"></div>
<div class="t" style="left:297.4px;top:815.40px;font-size:9.2px;color:#77787d;">Saturation</div>
<div class="a" style="left:342.4px;top:812.0px;width:33.2px;height:14.0px;background:#1c1c1f;border:1px solid #202124;border-bottom-color:#3a3b41;border-radius:2.5px"></div>
<div class="t" style="left:209.0px;width:300px;text-align:center;top:815.40px;font-size:9.2px;color:#f0f0f0;">50.00</div>
<div class="a" style="left:347.4px;top:827.5px;width:23.2px;height:2px;border-radius:1px;background:linear-gradient(90deg,#e02020,#e0c020 25%,#20c040 50%,#2060e0 75%,#c030d0)"></div>
<div class="t" style="left:416.8px;top:815.40px;font-size:9.2px;color:#77787d;">Hue</div>
<div class="a" style="left:437.0px;top:812.0px;width:32.6px;height:14.0px;background:#1c1c1f;border:1px solid #202124;border-bottom-color:#3a3b41;border-radius:2.5px"></div>
<div class="t" style="left:303.3px;width:300px;text-align:center;top:815.40px;font-size:9.2px;color:#f0f0f0;">50.00</div>
<div class="a" style="left:442.0px;top:827.5px;width:22.6px;height:2px;border-radius:1px;background:linear-gradient(90deg,#e02020,#e0c020 25%,#20c040 50%,#2060e0 75%,#c030d0)"></div>
<div class="t" style="left:492.6px;top:815.40px;font-size:9.2px;color:#77787d;">Lum Mix</div>
<div class="a" style="left:529.8px;top:812.0px;width:34.2px;height:14.0px;background:#1c1c1f;border:1px solid #202124;border-bottom-color:#3a3b41;border-radius:2.5px"></div>
<div class="t" style="left:396.9px;width:300px;text-align:center;top:815.40px;font-size:9.2px;color:#f0f0f0;">100.00</div>
<div class="a" style="left:534.8px;top:827.5px;width:24.2px;height:2px;border-radius:1px;background:linear-gradient(90deg,#e02020,#e06060 40%,#f2f2f2 60%,#f2f2f2)"></div>
<div class="a" style="left:980px;top:556px;width:1.4px;height:281px;background:#1b1c1f;"></div>
<div class="t" style="left:987.2px;top:561.80px;font-size:9.4px;color:#f0f0f0;font-weight:bold">Tools</div>
<div class="a" style="left:987.2px;top:575.4px;width:168px;height:16.8px;background:#2b2c31;border:1px solid #17181a;border-radius:3px;overflow:hidden"><div class="a" style="left:0;top:0;width:31.6px;height:100%;background:#18191c"></div><div class="a" style="left:31.6px;top:0;width:1px;height:100%;background:#17181a"></div><div class="a" style="left:65.1px;top:0;width:1px;height:100%;background:#17181a"></div><div class="a" style="left:98.6px;top:0;width:1px;height:100%;background:#17181a"></div><div class="a" style="left:132.1px;top:0;width:1px;height:100%;background:#17181a"></div></div>
<svg class="a" style="left:997.5px;top:577.8px;" width="13" height="12" viewBox="0 0 13 12"><path d="M1,7.2 L6,1.6 L10,5.4 L5,10.8 Q2.4,11.4 1,7.2Z" fill="none" stroke="#f2f2f2" stroke-width="1.1"/><circle cx="4.2" cy="7.6" r="1" fill="#f2f2f2"/><path d="M10,7.4 v4.4 M7.8,9.6 h4.4" stroke="#f2f2f2" stroke-width="1.3"/></svg>
<svg class="a" style="left:1031.1px;top:577.8px;" width="13" height="12" viewBox="0 0 13 12"><circle cx="4" cy="7.4" r="2.4" fill="none" stroke="#4e4f54" stroke-width="1" stroke-dasharray="1.6,1"/><circle cx="7.6" cy="3.4" r="2" fill="none" stroke="#4e4f54" stroke-width="1" stroke-dasharray="1.6,1"/><path d="M10,7.4 v4.4 M7.8,9.6 h4.4" stroke="#55565b" stroke-width="1.2"/></svg>
<svg class="a" style="left:1066.7px;top:577.8px;" width="9" height="12" viewBox="0 0 9 12"><circle cx="4.5" cy="3.4" r="2.8" fill="none" stroke="#8e8e93" stroke-width="1.1"/><path d="M4.5,6.2 v4 M1.5,11.2 h6" stroke="#8e8e93" stroke-width="1.1"/></svg>
<svg class="a" style="left:1100.3px;top:578.3px;" width="9" height="11" viewBox="0 0 9 11"><path d="M1,0.5 L1,9.4 L3.4,7.4 L5,10.8 L6.4,10.2 L4.8,6.8 L8,6.6z" fill="#c8c8cc"/></svg>
<svg class="a" style="left:1134.4px;top:578.8px;" width="8" height="10" viewBox="0 0 8 10"><path d="M0.5,2 h7 M2.6,2 v-1.4 h2.8 v1.4 M1.2,2 l0.5,7.4 h4.6 l0.5,-7.4" fill="#3e3f44" stroke="#3e3f44" stroke-width="0.9"/></svg>
<div class="a" style="left:981.4000000000001px;top:599px;width:180px;height:1px;background:#1b1c1f;"></div>
<div class="t" style="left:987.2px;top:609.40px;font-size:9.2px;color:#85868b;">Pin</div>
<svg class="a" style="left:1142.3px;top:607.5px;" width="11" height="11" viewBox="0 0 11 11"><path d="M2.2,3 A4.6,4.6 0 1 1 1,6.2" fill="none" stroke="#4e4f54" stroke-width="1"/><path d="M0.4,0.8 L1.8,3.6 L4.8,2.8" fill="none" stroke="#4e4f54" stroke-width="1"/></svg>
<div class="t" style="left:987.2px;top:625.40px;font-size:8.2px;color:#47484e;">Chroma Range</div>
<div class="t" style="right:399.0px;top:624.80px;font-size:8.4px;color:#47484e;">0.040</div>
<div class="a" style="left:986.8px;top:635.6px;width:168.2px;height:3.2px;background:#141518;border-radius:1.6px"></div>
<div class="a" style="left:987.5999999999999px;top:636.3000000000001px;width:166.6px;height:1.8px;background:#808186;border-radius:1px"></div>
<div class="a" style="left:1019.8px;top:635.6px;width:4px;height:3.2px;background:#141518;"></div>
<div class="a" style="left:1020.8999999999999px;top:636.3000000000001px;width:1.8px;height:1.8px;background:#808186;"></div>
<div class="t" style="left:987.2px;top:652.40px;font-size:8.2px;color:#47484e;">Tonal Range Low</div>
<div class="t" style="right:399.0px;top:651.80px;font-size:8.4px;color:#47484e;">1.000</div>
<div class="a" style="left:986.8px;top:662.4px;width:168.2px;height:3.2px;background:#141518;border-radius:1.6px"></div>
<div class="a" style="left:987.5999999999999px;top:663.1px;width:166.6px;height:1.8px;background:#808186;border-radius:1px"></div>
<div class="a" style="left:1150.4px;top:662.4px;width:4px;height:3.2px;background:#141518;"></div>
<div class="a" style="left:1151.5px;top:663.1px;width:1.8px;height:1.8px;background:#808186;"></div>
<div class="t" style="left:987.2px;top:678.40px;font-size:8.2px;color:#47484e;">Tonal Range High</div>
<div class="t" style="right:399.0px;top:678.80px;font-size:8.4px;color:#47484e;">1.000</div>
<div class="a" style="left:986.8px;top:689.1px;width:168.2px;height:3.2px;background:#141518;border-radius:1.6px"></div>
<div class="a" style="left:987.5999999999999px;top:689.8000000000001px;width:166.6px;height:1.8px;background:#808186;border-radius:1px"></div>
<div class="a" style="left:1150.4px;top:689.1px;width:4px;height:3.2px;background:#141518;"></div>
<div class="a" style="left:1151.5px;top:689.8000000000001px;width:1.8px;height:1.8px;background:#808186;"></div>
<div class="t" style="left:987.2px;top:705.40px;font-size:8.2px;color:#47484e;">Tonal Range Pivot</div>
<div class="t" style="right:399.0px;top:704.80px;font-size:8.4px;color:#47484e;">0.500</div>
<div class="a" style="left:986.8px;top:715.9px;width:168.2px;height:3.2px;background:#141518;border-radius:1.6px"></div>
<div class="a" style="left:987.5999999999999px;top:716.6px;width:166.6px;height:1.8px;background:#808186;border-radius:1px"></div>
<div class="a" style="left:1068.6px;top:715.9px;width:4px;height:3.2px;background:#141518;"></div>
<div class="a" style="left:1069.6999999999998px;top:716.6px;width:1.8px;height:1.8px;background:#808186;"></div>
<div class="t" style="left:987.2px;top:736.40px;font-size:8.2px;color:#47484e;">Exposure</div>
<div class="t" style="right:399.0px;top:735.80px;font-size:8.4px;color:#47484e;">0.000</div>
<div class="a" style="left:986.8px;top:747.0px;width:168.2px;height:3.2px;background:#141518;border-radius:1.6px"></div>
<div class="a" style="left:987.5999999999999px;top:747.7px;width:166.6px;height:1.8px;background:#808186;border-radius:1px"></div>
<div class="a" style="left:1068.6px;top:747.0px;width:4px;height:3.2px;background:#141518;"></div>
<div class="a" style="left:1069.6999999999998px;top:747.7px;width:1.8px;height:1.8px;background:#808186;"></div>
<div class="a" style="left:987.2px;top:763.2px;width:67.4px;height:16.2px;background:#1d1e22;border:1px solid #17181a;border-radius:3px"><div class="a" style="left:33px;top:0;width:1px;height:100%;background:#111214"></div></div>
<svg class="a" style="left:999.5px;top:766.9px;" width="9" height="9" viewBox="0 0 9 9"><path d="M1,8 L4,5 M3.2,3.6 L5.6,6 M4.6,4.4 L7,2 a1,1 0 0 0 -1.4,-1.4 L3.2,3" fill="none" stroke="#2e2f34" stroke-width="1.2"/></svg>
<svg class="a" style="left:1033.1px;top:766.9px;" width="9" height="9" viewBox="0 0 9 9"><path d="M1,8 L4,5 M3.2,3.6 L5.6,6 M4.6,4.4 L7,2 a1,1 0 0 0 -1.4,-1.4 L3.2,3" fill="none" stroke="#2e2f34" stroke-width="1.2"/></svg>
<div class="a" style="left:582px;top:556px;width:57.4px;height:281px;background:#232427;"></div>
<div class="a" style="left:921px;top:556px;width:59px;height:281px;background:#232427;"></div>
<div class="a" style="left:0px;top:836.6px;width:1550px;height:1px;background:#111214;"></div>
<svg class="a" style="left:32.6px;top:848.5px;" width="14" height="13" viewBox="0 0 14 13"><circle cx="7" cy="3.4" r="2.9" fill="#f2f2f2"/><circle cx="3.3" cy="9.6" r="2.9" fill="#f2f2f2"/><circle cx="10.7" cy="9.6" r="2.9" fill="#f2f2f2"/></svg>
<div class="t" style="left:52.6px;top:850.80px;font-size:9.4px;color:#f2f2f2;font-weight:bold;letter-spacing:0.1px">DaVinci Resolve Studio 20</div>
<div class="a" style="left:819.8px;top:837px;width:84.8px;height:35px;background:#000;"></div>
<div class="a" style="left:819.8px;top:869.6px;width:84.8px;height:2.4px;background:#e8453c;"></div>
<div class="t" style="left:365.0px;width:300px;text-align:center;top:859.40px;font-size:9.2px;color:#77787d;">Media</div>
<div class="t" style="left:451.6px;width:300px;text-align:center;top:859.40px;font-size:9.2px;color:#77787d;">Cut</div>
<div class="t" style="left:538.6px;width:300px;text-align:center;top:859.40px;font-size:9.2px;color:#77787d;">Edit</div>
<div class="t" style="left:625.0px;width:300px;text-align:center;top:859.40px;font-size:9.2px;color:#77787d;">Fusion</div>
<div class="t" style="left:711.8px;width:300px;text-align:center;top:859.40px;font-size:9.2px;color:#f2f2f2;font-weight:bold">Color</div>
<div class="t" style="left:798.8px;width:300px;text-align:center;top:859.40px;font-size:9.2px;color:#77787d;">Fairlight</div>
<div class="t" style="left:885.2px;width:300px;text-align:center;top:859.40px;font-size:9.2px;color:#77787d;">Deliver</div>
<svg class="a" style="left:508.5px;top:842.4px;" width="14" height="12" viewBox="0 0 14 12"><rect x="0.6" y="2.6" width="12.8" height="8.8" rx="1.2" fill="none" stroke="#77787d" stroke-width="1"/><path d="M2,0.8 h10" stroke="#77787d" stroke-width="1"/><path d="M3,9.4 l2.4,-3 l2,2 l1.4,-1.2 l2.2,2.2z" fill="#77787d"/></svg>
<svg class="a" style="left:593.0px;top:842.9px;" width="18" height="11" viewBox="0 0 18 11"><path d="M7,1 h9 l-1.6,9 h-9z" fill="none" stroke="#77787d" stroke-width="1"/><path d="M10.4,1 l-1.6,9 M13,3 l-1,5" stroke="#77787d" stroke-width="0.9"/><path d="M0,3 h6 M1.5,5.5 h4 M0,8 h5" stroke="#77787d" stroke-width="0.9"/></svg>
<svg class="a" style="left:680.8px;top:842.9px;" width="16" height="11" viewBox="0 0 16 11"><path d="M0,1.4 h6 M10,1.4 h6 M0,5.5 h4 M12,5.5 h4 M0,9.6 h6 M10,9.6 h6" stroke="#b0b0b4" stroke-width="1.2"/><path d="M8,0 v11" stroke="#b0b0b4" stroke-width="1.2"/><path d="M5.4,5.5 h5.2" stroke="#b0b0b4" stroke-width="1.2"/></svg>
<svg class="a" style="left:769.5px;top:841.9px;" width="13" height="13" viewBox="0 0 13 13"><path d="M3,12.4 L8,3.4 L10.4,4.8 L5.6,13Z" fill="#77787d"/><path d="M9,1.4 l1,-1.4 M11.6,2.4 l1.4,-0.8 M11.8,5 h1.2 M2,2 l0.6,1.4 M0.6,4.6 h1.6" stroke="#77787d" stroke-width="0.8"/></svg>
<svg class="a" style="left:854.8px;top:841.4px;" width="14" height="14" viewBox="0 0 14 14"><circle cx="7.00" cy="1.80" r="1.25" fill="#ff4d8a"/><circle cx="10.68" cy="3.32" r="1.25" fill="#ff8a3c"/><circle cx="12.20" cy="7.00" r="1.25" fill="#ffd23c"/><circle cx="10.68" cy="10.68" r="1.25" fill="#5ad25a"/><circle cx="7.00" cy="12.20" r="1.25" fill="#3cc8c8"/><circle cx="3.32" cy="10.68" r="1.25" fill="#4d8aff"/><circle cx="1.80" cy="7.00" r="1.25" fill="#a05aff"/><circle cx="3.32" cy="3.32" r="1.25" fill="#e05ad2"/></svg>
<svg class="a" style="left:943.1px;top:842.4px;" width="11" height="12" viewBox="0 0 11 12"><path d="M3.6,9.6 V2.4 L10,0.8 V8" fill="none" stroke="#b0b0b4" stroke-width="1.1"/><ellipse cx="2.2" cy="9.8" rx="2" ry="1.5" fill="#b0b0b4"/><ellipse cx="8.6" cy="8.2" rx="2" ry="1.5" fill="#b0b0b4"/></svg>
<svg class="a" style="left:1028.9px;top:841.9px;" width="13" height="13" viewBox="0 0 13 13"><path d="M12.4,0.6 Q7,0.8 4.4,5.4 L3,8 L5,10 L7.6,8.6 Q12.2,6 12.4,0.6Z" fill="none" stroke="#77787d" stroke-width="1"/><circle cx="8.8" cy="4.2" r="1.1" fill="#77787d"/><path d="M3.4,5.6 L1,6.4 M7.4,9.6 L6.6,12 M2.6,10.4 L0.6,12.4" stroke="#77787d" stroke-width="0.9"/></svg>
<svg class="a" style="left:1483.4px;top:849.5px;" width="12" height="11" viewBox="0 0 12 11"><path d="M6,0.6 L11.6,5.8 H10 V10.6 H7.2 V7.2 H4.8 V10.6 H2 V5.8 H0.4Z" fill="#c8c8cc"/></svg>
<svg class="a" style="left:1518.5px;top:848.5px;" width="13" height="13" viewBox="0 0 13 13"><circle cx="6.5" cy="6.5" r="3.1" fill="none" stroke="#c8c8cc" stroke-width="1.5"/><path d="M10.30,6.50 L12.50,6.50" stroke="#c8c8cc" stroke-width="1.7"/><path d="M9.19,9.19 L10.74,10.74" stroke="#c8c8cc" stroke-width="1.7"/><path d="M6.50,10.30 L6.50,12.50" stroke="#c8c8cc" stroke-width="1.7"/><path d="M3.81,9.19 L2.26,10.74" stroke="#c8c8cc" stroke-width="1.7"/><path d="M2.70,6.50 L0.50,6.50" stroke="#c8c8cc" stroke-width="1.7"/><path d="M3.81,3.81 L2.26,2.26" stroke="#c8c8cc" stroke-width="1.7"/><path d="M6.50,2.70 L6.50,0.50" stroke="#c8c8cc" stroke-width="1.7"/><path d="M9.19,3.81 L10.74,2.26" stroke="#c8c8cc" stroke-width="1.7"/></svg>
</div></body></html>
